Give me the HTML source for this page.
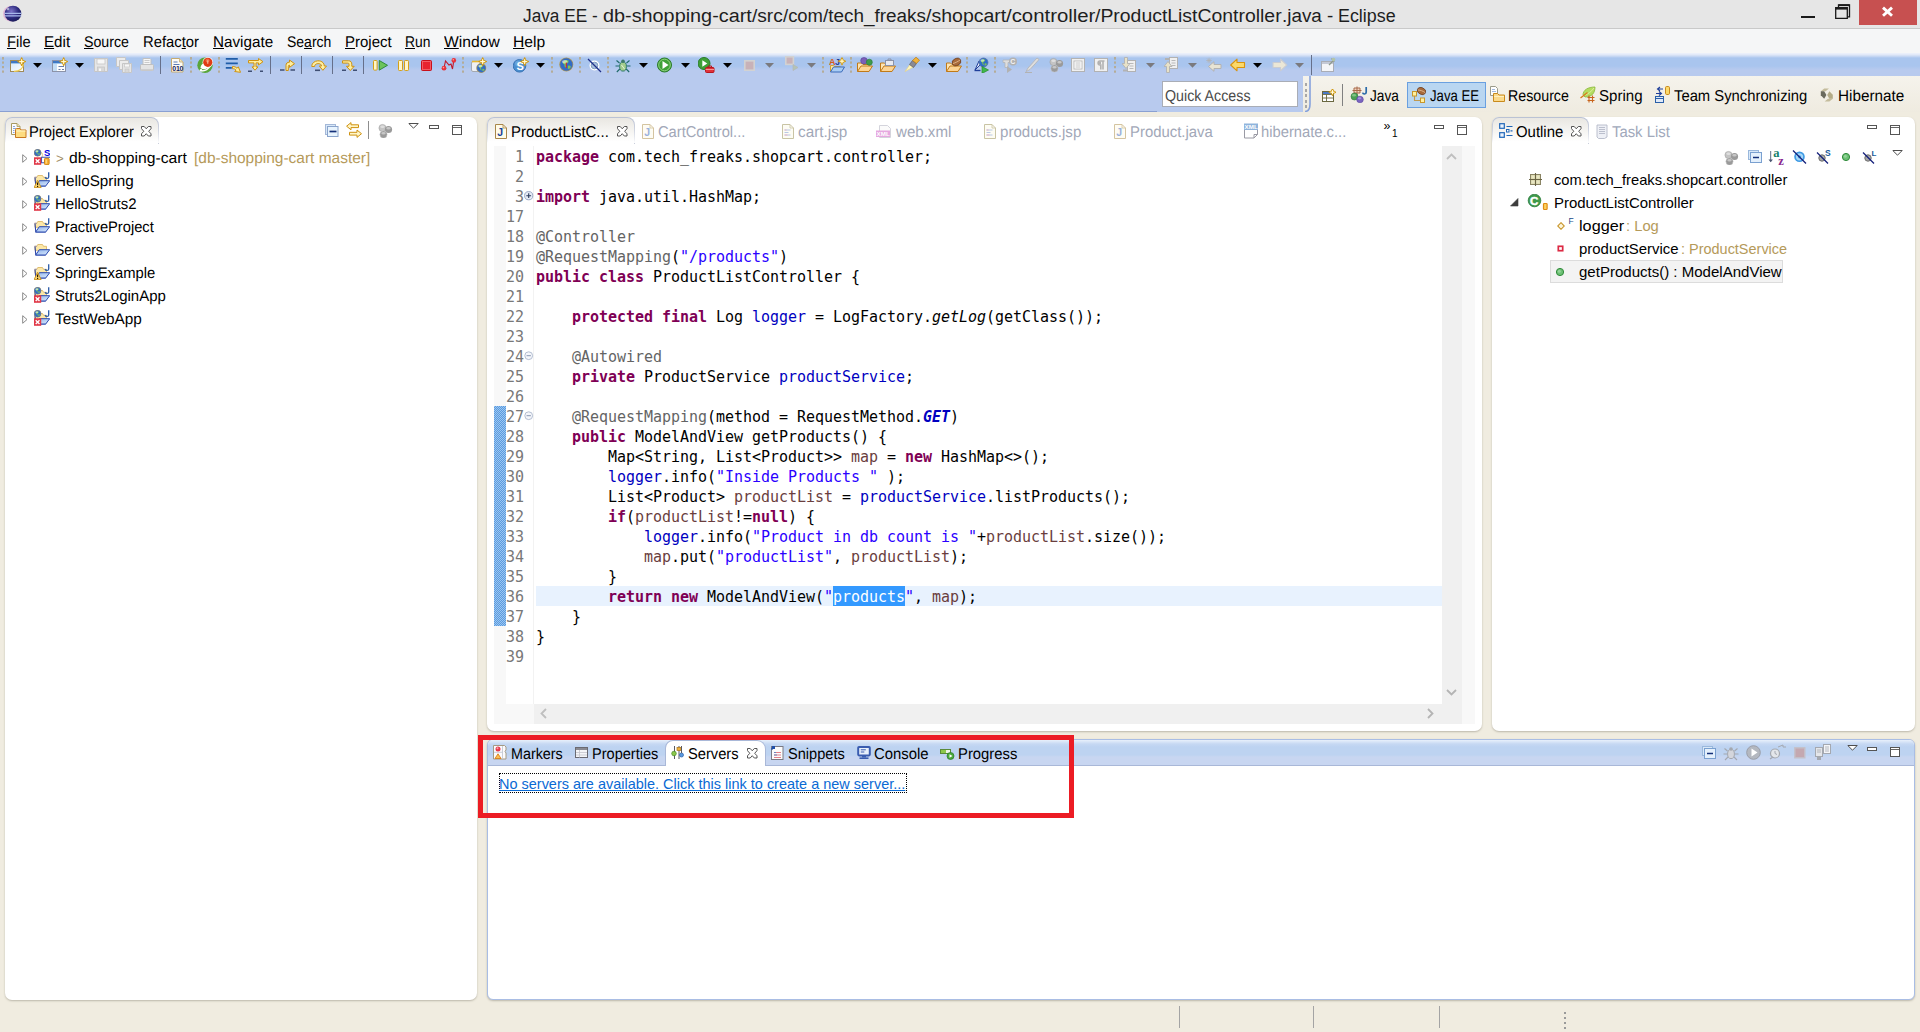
<!DOCTYPE html>
<html lang="en"><head><meta charset="utf-8"><title>Java EE - Eclipse</title>
<style>
html,body{margin:0;padding:0}
body{width:1920px;height:1032px;position:relative;overflow:hidden;background:#f0ece0;font-family:"Liberation Sans",sans-serif}
body>div,body>span,body>svg,body>a{position:absolute;display:block;box-sizing:border-box}
span{white-space:pre}
.s{font-family:"Liberation Sans",sans-serif}
.m{font-family:"DejaVu Sans Mono","Liberation Mono",monospace}
b.k{color:#7f0055;font-weight:bold}
i.f{color:#0000c0;font-style:normal}
i.g{color:#6a3e3e;font-style:normal}
i.a{color:#646464;font-style:normal}
i.q{color:#2a00ff;font-style:normal}
</style></head>
<body>
<svg width="0" height="0" style="left:0;top:0"><defs><linearGradient id="pfg" x1="0" y1="0" x2="1" y2="1"><stop offset="0" stop-color="#8fb4ec"/><stop offset="1" stop-color="#dceafc"/></linearGradient><linearGradient id="gnw" x1="0" y1="0" x2="1" y2="1"><stop offset="0" stop-color="#d4e8fa"/><stop offset="1" stop-color="#fff"/></linearGradient><radialGradient id="ecl" cx="40%" cy="35%" r="70%"><stop offset="0" stop-color="#7d74c8"/><stop offset="0.6" stop-color="#2c2a7e"/><stop offset="1" stop-color="#1b1a55"/></radialGradient></defs></svg>
<div style="left:0px;top:0px;width:1920px;height:29px;background:#e6e6e6;border-bottom:1px solid #c9c9c9"></div>
<span class="s" style="left:523.3px;top:3.56px;font-size:18px;line-height:24px;color:#1e1e1e;transform:scaleX(0.9587);transform-origin:0 50%;">Java EE - </span>
<span class="s" style="left:602.9px;top:3.56px;font-size:18px;line-height:24px;color:#1e1e1e;transform:scaleX(1.1015);transform-origin:0 50%;">db-shopping-cart</span>
<span class="s" style="left:751.7px;top:3.56px;font-size:18px;line-height:24px;color:#1e1e1e;transform:scaleX(1.0621);transform-origin:0 50%;">/src</span>
<span class="s" style="left:782.5px;top:3.56px;font-size:18px;line-height:24px;color:#1e1e1e;transform:scaleX(1.0252);transform-origin:0 50%;">/com</span>
<span class="s" style="left:822.5px;top:3.56px;font-size:18px;line-height:24px;color:#1e1e1e;transform:scaleX(1.0504);transform-origin:0 50%;">/tech_freaks</span>
<span class="s" style="left:925.5px;top:3.56px;font-size:18px;line-height:24px;color:#1e1e1e;transform:scaleX(1.0844);transform-origin:0 50%;">/shopcart</span>
<span class="s" style="left:1005.8px;top:3.56px;font-size:18px;line-height:24px;color:#1e1e1e;transform:scaleX(1.1312);transform-origin:0 50%;">/controller</span>
<span class="s" style="left:1095.2px;top:3.56px;font-size:18px;line-height:24px;color:#1e1e1e;transform:scaleX(1.0781);transform-origin:0 50%;">/ProductListController</span>
<span class="s" style="left:1281.8px;top:3.56px;font-size:18px;line-height:24px;color:#1e1e1e;transform:scaleX(1.0475);transform-origin:0 50%;">.java - </span>
<span class="s" style="left:1338.4px;top:3.56px;font-size:18px;line-height:24px;color:#1e1e1e;transform:scaleX(0.9926);transform-origin:0 50%;">Eclipse</span>
<svg style="left:3px;top:5px;" width="20" height="18" viewBox="0 0 20 18"><ellipse cx="8" cy="8.700" rx="8" ry="7.800" fill="#e0a8d0" opacity=".75"/><ellipse cx="10" cy="8.700" rx="8.300" ry="8" fill="url(#ecl)"/>
<path d="M1.500 8.300h17M1.700 10.800h16.600" stroke="#a8b8ec" stroke-width="1.300"/><circle cx="5" cy="4" r="1.300" fill="#fff" opacity=".5"/></svg>
<div style="left:1801px;top:16px;width:14px;height:2px;background:#1a1a1a"></div>
<svg style="left:1835px;top:4px;" width="16" height="16" viewBox="0 0 16 16"><path d="M3.500 3V0.800h11v12h-2" fill="none" stroke="#1a1a1a" stroke-width="1.300"/><path d="M3.500 1.200h11" stroke="#1a1a1a" stroke-width="1.800"/><path d="M0.700 3.700h11.600v10.600h-11.600z" fill="none" stroke="#1a1a1a" stroke-width="1.300"/><path d="M0.700 4.300h11.600" stroke="#1a1a1a" stroke-width="2.600"/></svg>
<div style="left:1859px;top:0px;width:58px;height:25px;background:#c75050"></div>
<svg style="left:1881px;top:6px;" width="13" height="12" viewBox="0 0 13 12"><path d="M2 1.600l9 8.200M11 1.600l-9 8.200" stroke="#fff" stroke-width="2.900" fill="none"/></svg>
<div style="left:0px;top:29px;width:1920px;height:24px;background:#f5f6f7"></div>
<span class="s" style="left:7.0px;top:33.23px;font-size:15.5px;line-height:20px;color:#000;transform:scaleX(0.9446);transform-origin:0 50%;text-rendering:geometricPrecision;"><u>F</u>ile</span>
<span class="s" style="left:44.3px;top:33.23px;font-size:15.5px;line-height:20px;color:#000;transform:scaleX(0.9768);transform-origin:0 50%;text-rendering:geometricPrecision;"><u>E</u>dit</span>
<span class="s" style="left:84.0px;top:33.23px;font-size:15.5px;line-height:20px;color:#000;transform:scaleX(0.9160);transform-origin:0 50%;text-rendering:geometricPrecision;"><u>S</u>ource</span>
<span class="s" style="left:143.0px;top:33.23px;font-size:15.5px;line-height:20px;color:#000;transform:scaleX(0.9555);transform-origin:0 50%;text-rendering:geometricPrecision;">Refac<u>t</u>or</span>
<span class="s" style="left:213.0px;top:33.23px;font-size:15.5px;line-height:20px;color:#000;transform:scaleX(0.9822);transform-origin:0 50%;text-rendering:geometricPrecision;"><u>N</u>avigate</span>
<span class="s" style="left:286.9px;top:33.23px;font-size:15.5px;line-height:20px;color:#000;transform:scaleX(0.9015);transform-origin:0 50%;text-rendering:geometricPrecision;">Se<u>a</u>rch</span>
<span class="s" style="left:344.9px;top:33.23px;font-size:15.5px;line-height:20px;color:#000;transform:scaleX(0.9658);transform-origin:0 50%;text-rendering:geometricPrecision;"><u>P</u>roject</span>
<span class="s" style="left:405.0px;top:33.23px;font-size:15.5px;line-height:20px;color:#000;transform:scaleX(0.8927);transform-origin:0 50%;text-rendering:geometricPrecision;"><u>R</u>un</span>
<span class="s" style="left:443.7px;top:33.23px;font-size:15.5px;line-height:20px;color:#000;transform:scaleX(1.0101);transform-origin:0 50%;text-rendering:geometricPrecision;"><u>W</u>indow</span>
<span class="s" style="left:512.6999999999999px;top:33.23px;font-size:15.5px;line-height:20px;color:#000;transform:scaleX(1.0097);transform-origin:0 50%;text-rendering:geometricPrecision;"><u>H</u>elp</span>
<div style="left:0px;top:53px;width:1920px;height:59px;background:linear-gradient(#eef2fb 0px,#e2e9f8 1.5px,#cddbf4 3px,#a9c5ee 5px,#a9c5ee 13px,#b8caee 17px,#b8caee 57.5px,#8aa0d2 58.2px,#8aa0d2 59px)"></div>
<svg style="left:2px;top:57px;" width="3" height="17" viewBox="0 0 3 17"><rect x="0" y="0.0" width="2" height="2.6" fill="#b4a88e" opacity=".9"/><rect x="0" y="4.5" width="2" height="2.2" fill="#b4a88e" opacity=".9"/><rect x="0" y="9.0" width="2" height="2.2" fill="#b4a88e" opacity=".9"/><rect x="0" y="13.5" width="2" height="2.2" fill="#b4a88e" opacity=".9"/></svg>
<svg style="left:10px;top:57px;" width="16" height="16" viewBox="0 0 16 16"><rect x="0.500" y="3.500" width="13" height="11" fill="url(#gnw)" stroke="#a08a58"/><rect x="1" y="4" width="12" height="2" fill="#3f78c4"/><rect x="1" y="6" width="12" height="1" fill="#9cc4ec"/><path d="M4 14.300C10 14.300 13.300 11 13.300 7" fill="none" stroke="#f0cc50" stroke-width="1.300"/><path d="M11.7 0.7999999999999998L12.915999999999999 3.3839999999999995 15.5 4.6 12.915999999999999 5.816 11.7 8.399999999999999 10.484 5.816 7.8999999999999995 4.6 10.484 3.3839999999999995Z" fill="#f7d14a" stroke="#d19a16" stroke-width="1.100" stroke-linejoin="round"/><path d="M11.7 2.0999999999999996V7.099999999999999M9.2 4.6H14.2" stroke="#fffbe0" stroke-width="1"/></svg>
<svg style="left:33px;top:63px;" width="9" height="5" viewBox="0 0 9 5"><path d="M0 0H9L4.5 4.8Z" fill="#000"/></svg>
<svg style="left:52px;top:57px;" width="16" height="16" viewBox="0 0 16 16"><rect x="0.500" y="3.500" width="13" height="11" fill="#fdfdfd" stroke="#8c93a8"/><rect x="1" y="4" width="12" height="2" fill="#3f78c4"/><rect x="1" y="6" width="12" height="1" fill="#9cc4ec"/><rect x="1" y="7" width="4" height="7" fill="#c4def6"/><path d="M6.500 9.500h5.500M6.500 12.500h2M10 12.500h2" stroke="#6a7ea8" stroke-width="1.200"/><path d="M11.7 0.7999999999999998L12.915999999999999 3.3839999999999995 15.5 4.6 12.915999999999999 5.816 11.7 8.399999999999999 10.484 5.816 7.8999999999999995 4.6 10.484 3.3839999999999995Z" fill="#f7d14a" stroke="#d19a16" stroke-width="1.100" stroke-linejoin="round"/><path d="M11.7 2.0999999999999996V7.099999999999999M9.2 4.6H14.2" stroke="#fffbe0" stroke-width="1"/></svg>
<svg style="left:75px;top:63px;" width="9" height="5" viewBox="0 0 9 5"><path d="M0 0H9L4.5 4.8Z" fill="#000"/></svg>
<svg style="left:93px;top:57px;" width="16" height="16" viewBox="0 0 16 16"><path d="M1.5 1.5h13v13h-13z" fill="#e6e6e6" stroke="#c6c6c6"/><rect x="4" y="2" width="8" height="5" fill="#f7f7f7" stroke="#c6c6c6" stroke-width=".8"/><rect x="4.5" y="10" width="7" height="4.5" fill="#d8d8d8" stroke="#c6c6c6" stroke-width=".8"/><rect x="6" y="11.500" width="2" height="2.500" fill="#f7f7f7"/></svg>
<svg style="left:116px;top:57px;" width="16" height="16" viewBox="0 0 16 16"><path d="M0.5 0.5h9v9h-9z" fill="#ececec" stroke="#c6c6c6"/><path d="M3.5 3.5h9v9h-9z" fill="#ececec" stroke="#c6c6c6"/><path d="M6.5 6.5h9v9h-9z" fill="#e6e6e6" stroke="#c6c6c6"/><rect x="8.5" y="7" width="5" height="3" fill="#f7f7f7" stroke="#c6c6c6" stroke-width=".7"/><rect x="9" y="12" width="4" height="3.5" fill="#d8d8d8" stroke="#c6c6c6" stroke-width=".7"/></svg>
<svg style="left:139px;top:57px;" width="16" height="16" viewBox="0 0 16 16"><path d="M4 1.5h7l1 1v5h-8z" fill="#f6f6f6" stroke="#c0c0c0"/><path d="M5.500 3.500h5M5.500 5.500h5" stroke="#c0c0c0" stroke-width=".8"/><rect x="1.500" y="7.500" width="13" height="6" rx="1" fill="#e4e4e4" stroke="#c0c0c0"/><rect x="2" y="12" width="12" height="1.600" fill="#cecece"/></svg>
<div style="left:160px;top:56px;width:1px;height:18px;background:#66708a"></div>
<svg style="left:169px;top:57px;" width="16" height="16" viewBox="0 0 16 16"><path d="M2.500 1.500h8l3.500 3.500v10h-11.500z" fill="#fdfcf6" stroke="#c4aa72"/><path d="M10.500 1.500v3.500h3.500" fill="#f0e4c0" stroke="#c4aa72" stroke-width=".8"/><path d="M4.500 5h4M4.500 7.500h6" stroke="#5a7ab8" stroke-width="1.100"/><text x="3.300" y="14.300" font-family="Liberation Sans,sans-serif" font-weight="bold" font-size="7" letter-spacing="-0.300" fill="#14245c">010</text></svg>
<svg style="left:190px;top:57px;" width="3" height="17" viewBox="0 0 3 17"><rect x="0" y="0.0" width="2" height="2.6" fill="#b4a88e" opacity=".9"/><rect x="0" y="4.5" width="2" height="2.2" fill="#b4a88e" opacity=".9"/><rect x="0" y="9.0" width="2" height="2.2" fill="#b4a88e" opacity=".9"/><rect x="0" y="13.5" width="2" height="2.2" fill="#b4a88e" opacity=".9"/></svg>
<svg style="left:197px;top:57px;" width="16" height="16" viewBox="0 0 16 16"><circle cx="8" cy="8.200" r="7.700" fill="#5aa63a"/><path d="M3.500 11c0-3.500 3-5.500 6.500-5l3 3c-3 3-6 4.500-9.500 2z" fill="#fff"/><path d="M4.500 14c3.500 0 7-2 9-5.500" stroke="#fff" stroke-width="1.500" fill="none"/><circle cx="4" cy="13.300" r="1.300" fill="#fff"/><circle cx="10.800" cy="5.300" r="5.300" fill="#fff" opacity=".85"/><circle cx="10.800" cy="5.300" r="4.600" fill="#e03c14"/><circle cx="10.500" cy="3.600" r="2" fill="#f47a50" opacity=".8"/><path d="M10.800 3.300v3.500" stroke="#f8c4a8" stroke-width="1"/></svg>
<svg style="left:218px;top:57px;" width="3" height="17" viewBox="0 0 3 17"><rect x="0" y="0.0" width="2" height="2.6" fill="#b4a88e" opacity=".9"/><rect x="0" y="4.5" width="2" height="2.2" fill="#b4a88e" opacity=".9"/><rect x="0" y="9.0" width="2" height="2.2" fill="#b4a88e" opacity=".9"/><rect x="0" y="13.5" width="2" height="2.2" fill="#b4a88e" opacity=".9"/></svg>
<svg style="left:225px;top:57px;" width="16" height="16" viewBox="0 0 16 16"><path d="M0.800 1.800h12M0.800 6.300h12M0.800 10.800h6" stroke="#1f5ca8" stroke-width="1.700"/><path d="M7.500 9.500c2 0 3.500.5 4.500 1.800l1.300-1.500 2.200 5.500-5.800-.8 1.400-1.500c-1-1-2-1.300-3.600-1.300z" fill="#fdeea0" stroke="#cf9210" stroke-width="1" stroke-linejoin="round"/></svg>
<svg style="left:247px;top:57px;" width="16" height="16" viewBox="0 0 16 16"><path d="M1.500 3.500h10v-2l4.500 3.200-4.500 3.200v-2h-2.500v4h2l-3 3.300-3-3.300h2v-4h-5.500z" fill="#fdeea0" stroke="#cf9210" stroke-width="1" stroke-linejoin="round"/><path d="M1 14.300h4M13 14.300h4" stroke="#3f4f74" stroke-width="1.600"/></svg>
<div style="left:270px;top:56px;width:1px;height:18px;background:#66708a"></div>
<svg style="left:279px;top:57px;" width="16" height="16" viewBox="0 0 16 16"><path d="M7 13.500v-5c0-2.300 1.300-3.300 3.500-3.300v-2.200l5 3.700-5 3.700v-2.200c-.8 0-1.200.3-1.200 1.300v4z" fill="#fdeea0" stroke="#cf9210" stroke-width="1" stroke-linejoin="round"/><path d="M1 13h4.500M11.500 13h4.500" stroke="#3f4f74" stroke-width="1.600"/></svg>
<div style="left:301px;top:56px;width:1px;height:18px;background:#66708a"></div>
<svg style="left:311px;top:57px;" width="16" height="16" viewBox="0 0 16 16"><path d="M0.800 9.500c0-7.500 12.500-7.500 12.500-.5h2.200l-3.600 4.300-3.600-4.300h2.200c0-3.300-6.900-3.300-6.900.5z" fill="#fdeea0" stroke="#cf9210" stroke-width="1" stroke-linejoin="round"/><path d="M4 13.300h5" stroke="#3f4f74" stroke-width="1.600"/></svg>
<div style="left:332px;top:56px;width:1px;height:18px;background:#66708a"></div>
<svg style="left:341px;top:57px;" width="16" height="16" viewBox="0 0 16 16"><path d="M1.500 3.800h6c2.300 0 3.300 1.300 3.300 3.500v2h2.400l-3.900 4.200-3.900-4.200h2.600v-2c0-.8-.3-1.200-1.300-1.200h-5.200z" fill="#fdeea0" stroke="#cf9210" stroke-width="1" stroke-linejoin="round"/><path d="M1 13.300h4M12 13.300h4" stroke="#3f4f74" stroke-width="1.600"/></svg>
<div style="left:363px;top:56px;width:1px;height:18px;background:#66708a"></div>
<svg style="left:372px;top:57px;" width="16" height="16" viewBox="0 0 16 16"><rect x="1.500" y="3.500" width="3.600" height="9.600" rx=".8" fill="#fff6c8" stroke="#d4a017"/><path d="M7.300 3.500l8.200 4.800-8.200 4.800z" fill="#6cc45a" stroke="#2f8a3a" stroke-linejoin="round"/></svg>
<svg style="left:398px;top:57px;" width="16" height="16" viewBox="0 0 16 16"><rect x="0.500" y="3.500" width="4" height="10" rx=".8" fill="#fff6c8" stroke="#d4a017"/><rect x="6.500" y="3.500" width="4" height="10" rx=".8" fill="#fff6c8" stroke="#d4a017"/></svg>
<svg style="left:420px;top:57px;" width="16" height="16" viewBox="0 0 16 16"><rect x="1.500" y="3.500" width="10" height="10" rx="1" fill="#e8242e" stroke="#c8101a"/><rect x="2.500" y="4.500" width="8" height="8" fill="none" stroke="#f46a70" stroke-width=".8"/></svg>
<svg style="left:441px;top:57px;" width="16" height="16" viewBox="0 0 16 16"><path d="M3 11l1.500-7 3.500 4 2-1 1.500 5 1.300-8.500" fill="none" stroke="#c0182a" stroke-width="1.100"/><circle cx="3" cy="11.200" r="2.400" fill="#e8323a"/><circle cx="12.800" cy="3.400" r="2.300" fill="#e8323a"/><circle cx="2.500" cy="10.600" r=".8" fill="#f8a0a0"/><circle cx="12.300" cy="2.800" r=".8" fill="#f8a0a0"/></svg>
<svg style="left:462px;top:57px;" width="3" height="17" viewBox="0 0 3 17"><rect x="0" y="0.0" width="2" height="2.6" fill="#b4a88e" opacity=".9"/><rect x="0" y="4.5" width="2" height="2.2" fill="#b4a88e" opacity=".9"/><rect x="0" y="9.0" width="2" height="2.2" fill="#b4a88e" opacity=".9"/><rect x="0" y="13.5" width="2" height="2.2" fill="#b4a88e" opacity=".9"/></svg>
<svg style="left:471px;top:57px;" width="16" height="16" viewBox="0 0 16 16"><rect x="0.500" y="4.500" width="11" height="10" rx="1.500" fill="#eef0f4" stroke="#a4a8b0"/><path d="M1 4.500h10" stroke="#e8b830" stroke-width="1.600"/><circle cx="10.300" cy="11" r="5" fill="#d4b050"/><circle cx="10.3" cy="11" r="4.3" fill="#2f6cc8" stroke="#5a74a0" stroke-width=".7"/><path d="M7.94 9.06q1.94 -2.15 4.08 -0.64q-0.21 2.15 -1.94 1.94q-0.43 1.94 0.86 3.22q-2.15 -0.43 -1.94 -2.58q-1.50 -0.43 -1.07 -1.94z" fill="#7cc458"/><path d="M11.38 11.86q1.72 -0.43 2.15 0.86q-0.86 1.50 -2.15 1.29z" fill="#7cc458"/><ellipse cx="9.23" cy="9.06" rx="1.94" ry="1.20" fill="#fff" opacity=".55"/><path d="M11.7 0.7999999999999998L12.915999999999999 3.3839999999999995 15.5 4.6 12.915999999999999 5.816 11.7 8.399999999999999 10.484 5.816 7.8999999999999995 4.6 10.484 3.3839999999999995Z" fill="#f7d14a" stroke="#d19a16" stroke-width="1.100" stroke-linejoin="round"/><path d="M11.7 2.0999999999999996V7.099999999999999M9.2 4.6H14.2" stroke="#fffbe0" stroke-width="1"/></svg>
<svg style="left:494px;top:63px;" width="9" height="5" viewBox="0 0 9 5"><path d="M0 0H9L4.5 4.8Z" fill="#000"/></svg>
<svg style="left:513px;top:57px;" width="16" height="16" viewBox="0 0 16 16"><circle cx="6.500" cy="8.800" r="6.300" fill="#4a8ed0" stroke="#3a74b4"/><circle cx="5" cy="6.500" r="3" fill="#7ab0e4" opacity=".6"/><text x="3.600" y="13" font-family="Liberation Sans,sans-serif" font-weight="bold" font-size="11" fill="#fff">S</text><path d="M11.7 0.7999999999999998L12.915999999999999 3.3839999999999995 15.5 4.6 12.915999999999999 5.816 11.7 8.399999999999999 10.484 5.816 7.8999999999999995 4.6 10.484 3.3839999999999995Z" fill="#f7d14a" stroke="#d19a16" stroke-width="1.100" stroke-linejoin="round"/><path d="M11.7 2.0999999999999996V7.099999999999999M9.2 4.6H14.2" stroke="#fffbe0" stroke-width="1"/></svg>
<svg style="left:536px;top:63px;" width="9" height="5" viewBox="0 0 9 5"><path d="M0 0H9L4.5 4.8Z" fill="#000"/></svg>
<svg style="left:551px;top:57px;" width="3" height="17" viewBox="0 0 3 17"><rect x="0" y="0.0" width="2" height="2.6" fill="#b4a88e" opacity=".9"/><rect x="0" y="4.5" width="2" height="2.2" fill="#b4a88e" opacity=".9"/><rect x="0" y="9.0" width="2" height="2.2" fill="#b4a88e" opacity=".9"/><rect x="0" y="13.5" width="2" height="2.2" fill="#b4a88e" opacity=".9"/></svg>
<svg style="left:559px;top:57px;" width="16" height="16" viewBox="0 0 16 16"><circle cx="7.300" cy="7.500" r="7" fill="#c8a850"/><circle cx="7.3" cy="7.5" r="6.2" fill="#2f6cc8" stroke="#5a74a0" stroke-width=".7"/><path d="M3.89 4.71q2.79 -3.10 5.89 -0.93q-0.31 3.10 -2.79 2.79q-0.62 2.79 1.24 4.65q-3.10 -0.62 -2.79 -3.72q-2.17 -0.62 -1.55 -2.79z" fill="#7cc458"/><path d="M8.85 8.74q2.48 -0.62 3.10 1.24q-1.24 2.17 -3.10 1.86z" fill="#7cc458"/><ellipse cx="5.75" cy="4.71" rx="2.79" ry="1.74" fill="#fff" opacity=".55"/><path d="M7.300 5.500v4" stroke="#d8202a" stroke-width="1" fill="none"/><circle cx="7.300" cy="10.300" r=".8" fill="#d8202a"/></svg>
<svg style="left:579px;top:57px;" width="3" height="17" viewBox="0 0 3 17"><rect x="0" y="0.0" width="2" height="2.6" fill="#b4a88e" opacity=".9"/><rect x="0" y="4.5" width="2" height="2.2" fill="#b4a88e" opacity=".9"/><rect x="0" y="9.0" width="2" height="2.2" fill="#b4a88e" opacity=".9"/><rect x="0" y="13.5" width="2" height="2.2" fill="#b4a88e" opacity=".9"/></svg>
<svg style="left:587px;top:57px;" width="16" height="16" viewBox="0 0 16 16"><circle cx="7.500" cy="8.500" r="5" fill="#fff"/><circle cx="7.500" cy="8.500" r="3.300" fill="#a8c0dc" stroke="#7f9cc4" stroke-width="1"/><path d="M1 2l13 13" stroke="#1f2f8a" stroke-width="1.300"/></svg>
<svg style="left:607px;top:57px;" width="3" height="17" viewBox="0 0 3 17"><rect x="0" y="0.0" width="2" height="2.6" fill="#b4a88e" opacity=".9"/><rect x="0" y="4.5" width="2" height="2.2" fill="#b4a88e" opacity=".9"/><rect x="0" y="9.0" width="2" height="2.2" fill="#b4a88e" opacity=".9"/><rect x="0" y="13.5" width="2" height="2.2" fill="#b4a88e" opacity=".9"/></svg>
<svg style="left:615px;top:57px;" width="16" height="16" viewBox="0 0 16 16"><ellipse cx="8" cy="9.500" rx="3.400" ry="4.600" fill="#a4cc8c" stroke="#2f7a6a"/><circle cx="8" cy="4.300" r="1.800" fill="#3f7a6a"/><path d="M4.500 6l-3-2.500M11.500 6l3-2.500M4.300 9h-3.800M11.700 9h3.800M4.800 12l-3 3M11.200 12l3 3" stroke="#1f6a6a" stroke-width="1.100"/><path d="M6.500 8l3 4" stroke="#e4f4d8" stroke-width="1"/></svg>
<svg style="left:639px;top:63px;" width="9" height="5" viewBox="0 0 9 5"><path d="M0 0H9L4.5 4.8Z" fill="#000"/></svg>
<svg style="left:657px;top:57px;" width="16" height="16" viewBox="0 0 16 16"><circle cx="7.500" cy="8" r="7" fill="#3fa037" stroke="#2a7a2a"/><circle cx="7.500" cy="8" r="5.800" fill="none" stroke="#8fd07f" stroke-width="1"/><path d="M5.500 4l6 4-6 4z" fill="#fff"/></svg>
<svg style="left:681px;top:63px;" width="9" height="5" viewBox="0 0 9 5"><path d="M0 0H9L4.5 4.8Z" fill="#000"/></svg>
<svg style="left:698px;top:57px;" width="17" height="16" viewBox="0 0 17 16"><circle cx="6" cy="6.500" r="6" fill="#3fa037" stroke="#2a7a2a"/><path d="M4.300 3.300l5 3.200-5 3.200z" fill="#fff"/><rect x="7.500" y="10.500" width="8.500" height="5" rx="1" fill="#e0323a" stroke="#b8161e"/><path d="M10 10.500v-1.500h3.500v1.500" fill="none" stroke="#b8161e"/><path d="M7.500 12.500h8.500" stroke="#f7b0b0" stroke-width=".8"/></svg>
<svg style="left:723px;top:63px;" width="9" height="5" viewBox="0 0 9 5"><path d="M0 0H9L4.5 4.8Z" fill="#000"/></svg>
<svg style="left:744px;top:60px;" width="11" height="11" viewBox="0 0 11 11"><rect x="0.800" y="0.800" width="9.400" height="9.400" fill="#c8b2b8" stroke="#d2d2d2" stroke-width="1.600"/></svg>
<svg style="left:765px;top:63px;" width="9" height="5" viewBox="0 0 9 5"><path d="M0 0H9L4.5 4.8Z" fill="#7a7a7e"/></svg>
<svg style="left:785px;top:56px;" width="14" height="16" viewBox="0 0 14 16"><rect x="0.800" y="0.800" width="7.600" height="7.600" fill="#c8b2b8" stroke="#d2d2d2" stroke-width="1.600"/><path d="M8 8.500l5 3-5 3z" fill="#b4c4b4" stroke="#b4b8b8" stroke-width=".8"/></svg>
<svg style="left:807px;top:63px;" width="9" height="5" viewBox="0 0 9 5"><path d="M0 0H9L4.5 4.8Z" fill="#7a7a7e"/></svg>
<svg style="left:822px;top:57px;" width="3" height="17" viewBox="0 0 3 17"><rect x="0" y="0.0" width="2" height="2.6" fill="#b4a88e" opacity=".9"/><rect x="0" y="4.5" width="2" height="2.2" fill="#b4a88e" opacity=".9"/><rect x="0" y="9.0" width="2" height="2.2" fill="#b4a88e" opacity=".9"/><rect x="0" y="13.5" width="2" height="2.2" fill="#b4a88e" opacity=".9"/></svg>
<svg style="left:829px;top:57px;" width="17" height="16" viewBox="0 0 17 16"><path d="M1.500 15v-6.500h3l1 1h6" fill="#fce4a0" stroke="#d4a030"/><path d="M1.500 15l3-5h11l-3 5z" fill="#a8ccf4" stroke="#3a6ab8" stroke-linejoin="round"/><text x="0" y="8" font-family="Liberation Sans,sans-serif" font-weight="bold" font-size="9" fill="#d85a18">A</text><text x="6" y="8" font-family="Liberation Sans,sans-serif" font-weight="bold" font-size="9" fill="#1f3f9a">J</text><path d="M13 0.7000000000000002L14.120000000000001 3.08 16.5 4.2 14.120000000000001 5.32 13 7.7 11.879999999999999 5.32 9.5 4.2 11.879999999999999 3.08Z" fill="#f7d14a" stroke="#d19a16" stroke-width="1.100" stroke-linejoin="round"/><path d="M13 2.0V6.4M10.8 4.2H15.2" stroke="#fffbe0" stroke-width="1"/></svg>
<svg style="left:850px;top:57px;" width="3" height="17" viewBox="0 0 3 17"><rect x="0" y="0.0" width="2" height="2.6" fill="#b4a88e" opacity=".9"/><rect x="0" y="4.5" width="2" height="2.2" fill="#b4a88e" opacity=".9"/><rect x="0" y="9.0" width="2" height="2.2" fill="#b4a88e" opacity=".9"/><rect x="0" y="13.5" width="2" height="2.2" fill="#b4a88e" opacity=".9"/></svg>
<svg style="left:857px;top:57px;" width="16" height="16" viewBox="0 0 16 16"><path d="M0.500 14.500v-8.500h4l1.500 1.500h6v2" fill="#fce4b4" stroke="#c07a18"/><path d="M0.500 14.500l3.500-5.500h11.500l-3.500 5.500z" fill="#fcd494" stroke="#c07a18" stroke-linejoin="round"/><circle cx="7" cy="3.800" r="3.300" fill="#7a5fb8" stroke="#5a3f98" stroke-width=".6"/><circle cx="12.300" cy="5.200" r="3" fill="#3f9a4a" stroke="#2a7a3a" stroke-width=".6"/></svg>
<svg style="left:880px;top:57px;" width="16" height="16" viewBox="0 0 16 16"><path d="M0.500 14.500v-8.500h4l1.500 1.500h6v2" fill="#fce4b4" stroke="#c07a18"/><path d="M0.500 14.500l3.500-5.500h11.500l-3.500 5.500z" fill="#fcd494" stroke="#c07a18" stroke-linejoin="round"/><rect x="5.500" y="3.500" width="8" height="5" fill="#e8eaf0" stroke="#8c93a8"/><path d="M8 3.500v-1.500h3v1.500" fill="none" stroke="#8c93a8"/></svg>
<svg style="left:904px;top:57px;" width="16" height="16" viewBox="0 0 16 16"><path d="M1 14.500l5-7 3.500 2.500z" fill="#fff6c0" stroke="#e8d27a" stroke-width=".6"/><path d="M5.500 7.500l3-4 4 3-3 4z" fill="#8a8a92" stroke="#5a5a62" stroke-width=".7"/><path d="M8.500 3.500l3.500-3.300 3.500 3-3 3.300z" fill="#f0b23a" stroke="#b87a14" stroke-width=".7"/></svg>
<svg style="left:928px;top:63px;" width="9" height="5" viewBox="0 0 9 5"><path d="M0 0H9L4.5 4.8Z" fill="#000"/></svg>
<svg style="left:946px;top:57px;" width="16" height="16" viewBox="0 0 16 16"><path d="M0.500 14.500v-8.500h4l1.500 1.500h6v2" fill="#fce4b4" stroke="#c07a18"/><path d="M0.500 14.500l3.500-5.500h11.500l-3.500 5.500z" fill="#fcd494" stroke="#c07a18" stroke-linejoin="round"/><ellipse cx="10.500" cy="5" rx="4.500" ry="3.500" transform="rotate(-25 10.500 5)" fill="#a86a3a" stroke="#6a3a1a" stroke-width=".7"/><path d="M7 6.500c2-.5 5-2 7-3.500" stroke="#e8c49a" stroke-width=".8" fill="none"/></svg>
<svg style="left:966px;top:57px;" width="3" height="17" viewBox="0 0 3 17"><rect x="0" y="0.0" width="2" height="2.6" fill="#b4a88e" opacity=".9"/><rect x="0" y="4.5" width="2" height="2.2" fill="#b4a88e" opacity=".9"/><rect x="0" y="9.0" width="2" height="2.2" fill="#b4a88e" opacity=".9"/><rect x="0" y="13.5" width="2" height="2.2" fill="#b4a88e" opacity=".9"/></svg>
<svg style="left:974px;top:57px;" width="16" height="16" viewBox="0 0 16 16"><path d="M1 13l4-9 2 3z" fill="#e8ecf8" stroke="#1f3f9a" stroke-width="1"/><path d="M0.500 13.500h6" stroke="#1f3f9a" stroke-width="1.400"/><circle cx="9.5" cy="5.5" r="4.5" fill="#2f6cc8" stroke="#5a74a0" stroke-width=".7"/><path d="M7.03 3.48q2.02 -2.25 4.27 -0.67q-0.23 2.25 -2.02 2.02q-0.45 2.02 0.90 3.38q-2.25 -0.45 -2.02 -2.70q-1.57 -0.45 -1.12 -2.02z" fill="#7cc458"/><path d="M10.62 6.40q1.80 -0.45 2.25 0.90q-0.90 1.57 -2.25 1.35z" fill="#7cc458"/><ellipse cx="8.38" cy="3.48" rx="2.02" ry="1.26" fill="#fff" opacity=".55"/><path d="M8 9.500l6.500 3.500-6.500 3.500z" fill="#3fb84a" stroke="#2a8a2a" stroke-width=".7"/></svg>
<svg style="left:994px;top:57px;" width="3" height="17" viewBox="0 0 3 17"><rect x="0" y="0.0" width="2" height="2.6" fill="#b4a88e" opacity=".9"/><rect x="0" y="4.5" width="2" height="2.2" fill="#b4a88e" opacity=".9"/><rect x="0" y="9.0" width="2" height="2.2" fill="#b4a88e" opacity=".9"/><rect x="0" y="13.5" width="2" height="2.2" fill="#b4a88e" opacity=".9"/></svg>
<svg style="left:1002px;top:57px;" width="16" height="16" viewBox="0 0 16 16"><path d="M1 3h7v2.500h-2v5h-3v-5h-2z" fill="#dedede" stroke="#b2b2b2" stroke-width=".7"/><circle cx="11" cy="4.500" r="4" fill="#b2b2b2"/><text x="8.300" y="7" font-family="Liberation Sans,sans-serif" font-weight="bold" font-size="7" fill="#f4f4f8">C</text><path d="M5 9l5 3.500-5 3.500z" fill="#b2b2b2"/></svg>
<svg style="left:1025px;top:57px;" width="16" height="16" viewBox="0 0 16 16"><path d="M1 14.500l4-2 9-10 -2-1.500 -9 10z" fill="#dedede" stroke="#b2b2b2" stroke-width=".8"/><path d="M0 15.500h7" stroke="#b2b2b2" stroke-width="1"/></svg>
<svg style="left:1049px;top:57px;" width="16" height="16" viewBox="0 0 16 16"><circle cx="4.500" cy="5" r="3.600" fill="#c4c4c4" stroke="#9a9a9a" stroke-width=".5"/><ellipse cx="4.5" cy="3.7" rx="2.200" ry="1.300" fill="#fff" opacity=".45"/><circle cx="10.500" cy="6.500" r="3.600" fill="#9a9a9a"/><ellipse cx="10.5" cy="5.2" rx="2.200" ry="1.300" fill="#fff" opacity=".45"/><circle cx="5.500" cy="11.500" r="3.600" fill="#9a9a9a" stroke="#c4c4c4" stroke-width=".5"/><ellipse cx="5.5" cy="10.2" rx="2.200" ry="1.300" fill="#fff" opacity=".45"/></svg>
<svg style="left:1071px;top:57px;" width="16" height="16" viewBox="0 0 16 16"><rect x="0.500" y="1.500" width="13" height="13" fill="#f0f0f0" stroke="#b2b2b2"/><rect x="3" y="4" width="8" height="8" fill="#fff" stroke="#b2b2b2" stroke-width=".8"/><path d="M4.500 6h5M4.500 8h5M4.500 10h5" stroke="#b2b2b2" stroke-width=".8"/></svg>
<svg style="left:1094px;top:57px;" width="16" height="16" viewBox="0 0 16 16"><rect x="0.500" y="1.500" width="13" height="13" fill="#f0f0f0" stroke="#b2b2b2"/><path d="M10.500 4h-4.500c-2.500 0-2.500 4 0 4h.8v4.500M9 4v8.500" stroke="#b2b2b2" stroke-width="1.600" fill="none"/><path d="M6 4.500c-1.500 0-1.500 3 0 3h1v-3z" fill="#b2b2b2"/></svg>
<svg style="left:1114px;top:57px;" width="3" height="17" viewBox="0 0 3 17"><rect x="0" y="0.0" width="2" height="2.6" fill="#b4a88e" opacity=".9"/><rect x="0" y="4.5" width="2" height="2.2" fill="#b4a88e" opacity=".9"/><rect x="0" y="9.0" width="2" height="2.2" fill="#b4a88e" opacity=".9"/><rect x="0" y="13.5" width="2" height="2.2" fill="#b4a88e" opacity=".9"/></svg>
<svg style="left:1122px;top:57px;" width="16" height="16" viewBox="0 0 16 16"><rect x="5.500" y="3.500" width="8" height="11" fill="#f0f0f0" stroke="#b2b2b2"/><path d="M7.500 6.500h4M7.500 9h4M7.500 11.500h4" stroke="#b2b2b2" stroke-width=".9"/><path d="M2.500 0.500h3v6h2.500l-4 5-4-5h2.500z" fill="#e8e2c8" stroke="#b2b2b2" stroke-width=".9"/><rect x="1" y="12.500" width="5" height="2" fill="#b2b2b2"/></svg>
<svg style="left:1146px;top:63px;" width="9" height="5" viewBox="0 0 9 5"><path d="M0 0H9L4.5 4.8Z" fill="#7a7a7e"/></svg>
<svg style="left:1164px;top:57px;" width="16" height="16" viewBox="0 0 16 16"><rect x="5.500" y="0.500" width="8" height="11" fill="#f0f0f0" stroke="#b2b2b2"/><path d="M7.500 3.500h4M7.500 6h4M7.500 8.500h4" stroke="#b2b2b2" stroke-width=".9"/><path d="M2.500 15.500h3v-6h2.500l-4-5-4 5h2.500z" fill="#e8e2c8" stroke="#b2b2b2" stroke-width=".9"/><rect x="1" y="1" width="4" height="2" fill="#b2b2b2"/></svg>
<svg style="left:1188px;top:63px;" width="9" height="5" viewBox="0 0 9 5"><path d="M0 0H9L4.5 4.8Z" fill="#7a7a7e"/></svg>
<svg style="left:1206px;top:57px;" width="16" height="16" viewBox="0 0 16 16"><path d="M2.500 9.500l5.500-4.800v2.800h7v4h-7v2.800z" fill="#e8e4d4" stroke="#b2b2b2" stroke-width="1" stroke-linejoin="round"/><path d="M1 1.500l4 4M5 1.500l-4 4M3 0.800v5.400M0.300 3.500h5.400" stroke="#b2b2b2" stroke-width=".8"/></svg>
<svg style="left:1230px;top:57px;" width="16" height="16" viewBox="0 0 16 16"><path d="M0.700 8l6.300-5.800v3.300h7.500v5h-7.500v3.300z" fill="#fbd96a" stroke="#d9940f" stroke-width="1.100" stroke-linejoin="round"/></svg>
<svg style="left:1253px;top:63px;" width="9" height="5" viewBox="0 0 9 5"><path d="M0 0H9L4.5 4.8Z" fill="#000"/></svg>
<svg style="left:1272px;top:57px;" width="16" height="16" viewBox="0 0 16 16"><path d="M14.800 8l-6.300-5.800v3.300h-7.500v5h7.500v3.300z" fill="#ebe7d6" stroke="#c9ccd3" stroke-width="1.100" stroke-linejoin="round"/></svg>
<svg style="left:1295px;top:63px;" width="9" height="5" viewBox="0 0 9 5"><path d="M0 0H9L4.5 4.8Z" fill="#7a7a7e"/></svg>
<div style="left:1311px;top:55px;width:1px;height:20px;background:#66708a"></div>
<svg style="left:1321px;top:57px;" width="15" height="16" viewBox="0 0 15 16"><rect x="0.500" y="4.500" width="12" height="10" fill="#f4f5f8" stroke="#a9adb6"/><rect x="1" y="5" width="11" height="2" fill="#c4c9d6"/><path d="M8 8l4.500-4.500M10.500 1.500l3 3" stroke="#8e9a8e" stroke-width="1.300"/><circle cx="12.500" cy="2.500" r="1.800" fill="#b4c4a8"/></svg>
<div style="left:1162px;top:81px;width:136px;height:26px;background:#fff;border:1px solid #a9adb6"></div>
<span class="s" style="left:1165.0px;top:86.53px;font-size:15.8px;line-height:20px;color:#4a4a4a;transform:scaleX(0.9018);transform-origin:0 50%;text-rendering:geometricPrecision;">Quick Access</span>
<div style="left:1303px;top:76px;width:617px;height:36px;background:linear-gradient(#f5f3ec,#efebe0)"></div>
<div style="left:1157px;top:111px;width:146px;height:1px;background:#b8caee"></div>
<svg style="left:1303px;top:76px;" width="10" height="36" viewBox="0 0 10 36"><path d="M7 0V28C7 33 5.500 35.500 2 35.500" fill="none" stroke="#86a2dc" stroke-width="1.600"/></svg>
<div style="left:1304.5px;top:83.0px;width:2px;height:3px;background:#a8a8a8"></div>
<div style="left:1304.5px;top:88.6px;width:2px;height:3px;background:#a8a8a8"></div>
<div style="left:1304.5px;top:94.2px;width:2px;height:3px;background:#a8a8a8"></div>
<div style="left:1304.5px;top:99.8px;width:2px;height:3px;background:#a8a8a8"></div>
<div style="left:1304.5px;top:105.4px;width:2px;height:3px;background:#a8a8a8"></div>
<div style="left:1407px;top:82px;width:79px;height:26px;background:#b9d6f1;border:1px solid #6aa0e0"></div>
<svg style="left:1322px;top:89px;" width="14" height="13" viewBox="0 0 14 13"><rect x="0.500" y="2.500" width="11" height="10" fill="#fff" stroke="#6a6840"/><rect x="1" y="3" width="10" height="2" fill="#4a7ac8"/><path d="M0.500 5.500h11M4.500 5.500v7M0.500 9h11" stroke="#6a6840" stroke-width=".9"/><path d="M10.5 -0.19999999999999973L11.588000000000001 2.112 13.9 3.2 11.588000000000001 4.288 10.5 6.6 9.411999999999999 4.288 7.1 3.2 9.411999999999999 2.112Z" fill="#f7d14a" stroke="#d19a16" stroke-width="1.100" stroke-linejoin="round"/><path d="M10.5 1.1000000000000003V5.3M8.4 3.2H12.6" stroke="#fffbe0" stroke-width="1"/></svg>
<svg style="left:1350px;top:86px;" width="18" height="17" viewBox="0 0 18 17"><path d="M4 2h6v5h-6zM7 0.500v8M2.500 4.500h9" fill="#f0d4c0" stroke="#a86a4a" stroke-width="1"/><circle cx="4.500" cy="10.500" r="3.500" fill="#4aa054" stroke="#2a7a3a" stroke-width=".6"/><ellipse cx="4" cy="9.300" rx="2" ry="1.200" fill="#a4dca8" opacity=".6"/><circle cx="10" cy="13.500" r="3.300" fill="#7a64c0" stroke="#5a44a0" stroke-width=".6"/><ellipse cx="9.500" cy="12.300" rx="1.800" ry="1.100" fill="#c4b8ec" opacity=".6"/><path d="M16.200 1v5.300c0 2.200-3.200 2.200-3.500 .4" fill="none" stroke="#2a6aa8" stroke-width="1.700"/></svg>
<svg style="left:1412px;top:87px;" width="15" height="16" viewBox="0 0 15 16"><path d="M2.500 9v4.500h6" fill="none" stroke="#c09a50" stroke-width="1.100"/><rect x="0.500" y="4.500" width="4" height="4.500" fill="#fff0a0" stroke="#c8962c"/><rect x="8.500" y="11" width="4" height="4.500" fill="#fff0a0" stroke="#c8962c"/><ellipse cx="9.500" cy="4" rx="4.300" ry="3.300" transform="rotate(25 9.500 4)" fill="#a86a3a" stroke="#6a3a1a" stroke-width=".7"/><path d="M6 3c2 0 5 1 7 2.500" stroke="#e8c49a" stroke-width=".8" fill="none"/></svg>
<svg style="left:1490px;top:86px;" width="16" height="17" viewBox="0 0 16 17"><path d="M0.500 0.500h5l2 2v7h-7z" fill="#fff" stroke="#9a9a8a"/><path d="M2 3.500h3M2 5.500h4" stroke="#8aa8d8" stroke-width=".8"/><path d="M3.500 15.500v-8h4l1.500 1.500h5.500v6.500z" fill="#fbd98a" stroke="#c98a1c"/><path d="M4 10.500h10" stroke="#fdf0c0" stroke-width="1"/></svg>
<svg style="left:1580px;top:86px;" width="17" height="17" viewBox="0 0 17 17"><path d="M3 9c0-5 5-8 12-8 0 6-3 10-10 10z" fill="#b4dc60" stroke="#88b838" stroke-width=".8"/><path d="M5 9c3-1 6-3 9-7" stroke="#e0f0a0" stroke-width="1" fill="none"/><path d="M0.500 12l7-5.500" stroke="#d87a1c" stroke-width="1.300"/><path d="M9 9.500v7M12.500 9.500v7M7.500 11.500h7M7.500 14.500h7" stroke="#c8641c" stroke-width="1.100"/></svg>
<svg style="left:1655px;top:86px;" width="16" height="17" viewBox="0 0 16 17"><rect x="10.500" y="0.500" width="4" height="8" rx="1.200" fill="#fbd96a" stroke="#c98a1c"/><rect x="0.500" y="10.500" width="8" height="6" fill="#dfe9f8" stroke="#2a5fa8"/><path d="M0.500 12.500h8" stroke="#2a5fa8"/><path d="M8 3h-5M5 1l-2.500 2 2.500 2M1 7.500h5M4 5.500l2.500 2-2.500 2" fill="none" stroke="#1f3f9a" stroke-width="1.100"/></svg>
<svg style="left:1820px;top:88px;" width="14" height="14" viewBox="0 0 14 14"><path d="M0.800 3.300l3.400-2.800h4.800l-3.400 2.800z" fill="#c4bc9c"/><path d="M0.800 3.300h3.400l2.200 3.700-2.200 3.700-3.400-3.500z" fill="#6a6a5e"/><path d="M12.800 10.700l-3.400 2.800h-4.800l3.400-2.800z" fill="#c4bc9c"/><path d="M12.800 10.700h-3.400l-2.200-3.700 2.200-3.700 3.400 3.500z" fill="#b4ac88"/></svg>
<div style="left:1342px;top:84px;width:1px;height:22px;background:#808080"></div>
<span class="s" style="left:1370.4px;top:86.56px;font-size:15.7px;line-height:20px;color:#000;transform:scaleX(0.8720);transform-origin:0 50%;text-rendering:geometricPrecision;">Java</span>
<span class="s" style="left:1430.4px;top:86.56px;font-size:15.7px;line-height:20px;color:#000;transform:scaleX(0.8402);transform-origin:0 50%;text-rendering:geometricPrecision;">Java EE</span>
<span class="s" style="left:1508.4px;top:86.56px;font-size:15.7px;line-height:20px;color:#000;transform:scaleX(0.9071);transform-origin:0 50%;text-rendering:geometricPrecision;">Resource</span>
<span class="s" style="left:1599.4px;top:86.56px;font-size:15.7px;line-height:20px;color:#000;transform:scaleX(0.9612);transform-origin:0 50%;text-rendering:geometricPrecision;">Spring</span>
<span class="s" style="left:1673.6000000000001px;top:86.56px;font-size:15.7px;line-height:20px;color:#000;transform:scaleX(0.9436);transform-origin:0 50%;text-rendering:geometricPrecision;">Team Synchronizing</span>
<span class="s" style="left:1838.2px;top:86.56px;font-size:15.7px;line-height:20px;color:#000;transform:scaleX(0.9746);transform-origin:0 50%;text-rendering:geometricPrecision;">Hibernate</span>
<div style="left:5px;top:117px;width:472px;height:883px;background:#fff;border-radius:7px;box-shadow:0 1px 2px rgba(110,105,90,.4);"></div>
<div style="left:5px;top:117px;width:154px;height:26px;background:linear-gradient(#b9c1d4,#cfd4e0 50%,#eceef3 85%,#fff);border-radius:7px 8px 0 0"></div>
<div style="left:6px;top:118px;width:152px;height:25px;background:linear-gradient(#e9e7e2,#f5f4f1 50%,#fff 95%);border-radius:6px 7px 0 0"></div>
<div style="left:158px;top:143px;width:1px;height:1px;background:#c9cedb"></div>
<svg style="left:10px;top:123px;" width="17" height="16" viewBox="0 0 17 16"><path d="M1.500 0.500h5.500l3 3v8h-8.500z" fill="#fbfcff" stroke="#a89a60"/><path d="M7 0.500v3h3" fill="#e8dcb0" stroke="#a89a60" stroke-width=".8"/><path d="M3 3.500h2M3 5.500h3M3 7.500h1.500M3 9.500h1.500" stroke="#7a9ad8" stroke-width=".9"/><path d="M5.500 14.500v-8l1-1h3.500l1 1.500h5v7.500z" fill="#fddc80" stroke="#c87820" stroke-linejoin="round"/><path d="M6.500 8h9" stroke="#fff4c0" stroke-width="1.200"/></svg>
<span class="s" style="left:29.0px;top:122.09px;font-size:15.6px;line-height:20px;color:#000;transform:scaleX(0.9447);transform-origin:0 50%;text-rendering:geometricPrecision;margin-top:1px;">Project Explorer</span>
<svg style="left:140.5px;top:126px;" width="11" height="11" viewBox="0 0 11 11"><path d="M0.500 0.500H3.200L5.250 2.800 7.300 0.500H10V2.700L7.700 5.250 10 7.800V10H7.300L5.250 7.700 3.200 10H0.500V7.800L2.800 5.250 0.500 2.700Z" fill="#fff" stroke="#555" stroke-width="1" stroke-linejoin="miter"/></svg>
<svg style="left:325px;top:124px;" width="14" height="13" viewBox="0 0 14 13"><rect x="0.500" y="0.500" width="10" height="10" fill="#d8e8f8" stroke="#a4b8d8"/><rect x="2.500" y="2.500" width="10.500" height="10" fill="#e8f4fe" stroke="#8aa4cc"/><path d="M4.500 7.500h7" stroke="#14307a" stroke-width="1.700"/></svg>
<svg style="left:346px;top:122px;" width="16" height="16" viewBox="0 0 16 16"><path d="M0.600 4.200L5 0.600V2.800H12.500V5.600H5V7.800Z" fill="#fff6c8" stroke="#cf9210" stroke-width="1" stroke-linejoin="round"/><path d="M15.500 11.700L11 8V10.300H3.500V13.100H11V15.400Z" fill="#fff6c8" stroke="#cf9210" stroke-width="1" stroke-linejoin="round"/></svg>
<div style="left:368px;top:121px;width:1px;height:18px;background:#8e8e8e"></div>
<svg style="left:378px;top:123px;" width="15" height="15" viewBox="0 0 15 15"><circle cx="4.500" cy="5" r="3.600" fill="#c4c4c4" stroke="#9a9a9a" stroke-width=".5"/><ellipse cx="4.5" cy="3.7" rx="2.200" ry="1.300" fill="#fff" opacity=".45"/><circle cx="10.500" cy="6.500" r="3.600" fill="#9a9a9a"/><ellipse cx="10.5" cy="5.2" rx="2.200" ry="1.300" fill="#fff" opacity=".45"/><circle cx="5.500" cy="11.500" r="3.600" fill="#9a9a9a" stroke="#c4c4c4" stroke-width=".5"/><ellipse cx="5.5" cy="10.2" rx="2.200" ry="1.300" fill="#fff" opacity=".45"/></svg>
<svg style="left:408px;top:123px;" width="11" height="6" viewBox="0 0 11 6"><path d="M0.800 0.500h9.400l-4.700 4.700z" fill="#fff" stroke="#4d4d4d" stroke-width="1"/></svg>
<div style="left:429px;top:125px;width:10px;height:4px;border:1px solid #555;background:#fff"></div>
<div style="left:452px;top:125px;width:10px;height:10px;border:1px solid #555;background:#fff"></div>
<div style="left:453px;top:127px;width:8px;height:1px;background:#666"></div>
<svg style="left:22px;top:154.0px;" width="6" height="9" viewBox="0 0 6 9"><path d="M0.7 0.7L5 4.5 0.7 8.3Z" fill="#fff" stroke="#8a8a8a" stroke-width="1"/></svg>
<svg style="left:34px;top:149px;" width="16" height="16" viewBox="0 0 16 16"><path d="M7 3.500l1.500 1.500v3.500" fill="none" stroke="#e8d8a0" stroke-width="1.200"/><path d="M7 8.300h9M7.500 8.300v5.500h3" fill="none" stroke="#3a5ab8" stroke-width="1.100"/><circle cx="3.600" cy="3.700" r="3.700" fill="#c8b070"/><circle cx="3.6" cy="3.7" r="3.2" fill="#2f6cc8" stroke="#5a74a0" stroke-width=".7"/><path d="M1.84 2.26q1.44 -1.60 3.04 -0.48q-0.16 1.60 -1.44 1.44q-0.32 1.44 0.64 2.40q-1.60 -0.32 -1.44 -1.92q-1.12 -0.32 -0.80 -1.44z" fill="#7cc458"/><path d="M4.40 4.34q1.28 -0.32 1.60 0.64q-0.64 1.12 -1.60 0.96z" fill="#7cc458"/><ellipse cx="2.80" cy="2.26" rx="1.44" ry="0.90" fill="#fff" opacity=".55"/><rect x="0" y="8.300" width="7.200" height="7.500" fill="#e03848"/><path d="M1.700 10.200l3.800 3.800M5.500 10.200l-3.800 3.800" stroke="#fff" stroke-width="1.400"/><rect x="10.500" y="9.300" width="4.600" height="6.400" rx="1" fill="#f8b030" stroke="#d08010"/><path d="M12.200 10.500v4" stroke="#fde4a0" stroke-width="1"/><text x="10" y="7" font-family="Liberation Sans,sans-serif" font-weight="bold" font-size="9.500" fill="#0000e0">S</text></svg>
<span class="s" style="left:56.1px;top:148.82px;font-size:13.5px;line-height:20px;color:#a08c64;transform:scaleX(0.9885);transform-origin:0 50%;text-rendering:geometricPrecision;">&gt;</span>
<span class="s" style="left:69.0px;top:148.70px;font-size:15.3px;line-height:20px;color:#000;transform:scaleX(1.0262);transform-origin:0 50%;text-rendering:geometricPrecision;">db-shopping-cart</span>
<span class="s" style="left:194.0px;top:148.70px;font-size:15.3px;line-height:20px;color:#b59a5a;transform:scaleX(1.0115);transform-origin:0 50%;text-rendering:geometricPrecision;">[db-shopping-cart master]</span>
<svg style="left:22px;top:177.0px;" width="6" height="9" viewBox="0 0 6 9"><path d="M0.7 0.7L5 4.5 0.7 8.3Z" fill="#fff" stroke="#8a8a8a" stroke-width="1"/></svg>
<svg style="left:34px;top:172px;" width="16" height="16" viewBox="0 0 16 16"><path d="M1 5.300h1.800l1-1.800h4.700l1 1.800h3v4h-11.500z" fill="#fce8a8" stroke="#dcb868" stroke-width=".9" stroke-linejoin="round"/><path d="M0.300 5.300h2.500" stroke="#9a90a8" stroke-width="1"/><path d="M1 5.800l.8 8.200h10" fill="none" stroke="#3048a8" stroke-width="1.100"/><path d="M5.300 8.700h10.400l-4 5.300h-10z" fill="url(#pfg)" stroke="#2a4ab0" stroke-width="1" stroke-linejoin="round"/><path d="M14.700 0.300v4.600c0 2-3.300 2-3.500 .2" fill="none" stroke="#2a5aa8" stroke-width="1.300"/><path d="M3.600 8.300l3.500 7.300h-7z" fill="#fcd870" stroke="#c89018" stroke-width=".9" stroke-linejoin="round"/><path d="M3.600 10.600v2.600M3.600 14v.9" stroke="#2a1a00" stroke-width="1.200"/></svg>
<span class="s" style="left:55.199999999999996px;top:171.70px;font-size:15.3px;line-height:20px;color:#000;transform:scaleX(0.9952);transform-origin:0 50%;text-rendering:geometricPrecision;">HelloSpring</span>
<svg style="left:22px;top:200.0px;" width="6" height="9" viewBox="0 0 6 9"><path d="M0.7 0.7L5 4.5 0.7 8.3Z" fill="#fff" stroke="#8a8a8a" stroke-width="1"/></svg>
<svg style="left:34px;top:195px;" width="16" height="16" viewBox="0 0 16 16"><path d="M1 5.300h1.800l1-1.800h4.700l1 1.800h3v4h-11.500z" fill="#fce8a8" stroke="#dcb868" stroke-width=".9" stroke-linejoin="round"/><path d="M0.300 5.300h2.500" stroke="#9a90a8" stroke-width="1"/><path d="M1 5.800l.8 8.200h10" fill="none" stroke="#3048a8" stroke-width="1.100"/><path d="M5.300 8.700h10.400l-4 5.300h-10z" fill="url(#pfg)" stroke="#2a4ab0" stroke-width="1" stroke-linejoin="round"/><path d="M14.700 0.300v4.600c0 2-3.300 2-3.500 .2" fill="none" stroke="#2a5aa8" stroke-width="1.300"/><circle cx="3.600" cy="3.700" r="3.700" fill="#c8b070"/><circle cx="3.6" cy="3.7" r="3.2" fill="#2f6cc8" stroke="#5a74a0" stroke-width=".7"/><path d="M1.84 2.26q1.44 -1.60 3.04 -0.48q-0.16 1.60 -1.44 1.44q-0.32 1.44 0.64 2.40q-1.60 -0.32 -1.44 -1.92q-1.12 -0.32 -0.80 -1.44z" fill="#7cc458"/><path d="M4.40 4.34q1.28 -0.32 1.60 0.64q-0.64 1.12 -1.60 0.96z" fill="#7cc458"/><ellipse cx="2.80" cy="2.26" rx="1.44" ry="0.90" fill="#fff" opacity=".55"/><rect x="0" y="8.300" width="7.200" height="7.500" fill="#e03848"/><path d="M1.700 10.200l3.800 3.800M5.500 10.200l-3.800 3.800" stroke="#fff" stroke-width="1.400"/></svg>
<span class="s" style="left:55.199999999999996px;top:194.70px;font-size:15.3px;line-height:20px;color:#000;transform:scaleX(0.9781);transform-origin:0 50%;text-rendering:geometricPrecision;">HelloStruts2</span>
<svg style="left:22px;top:223.0px;" width="6" height="9" viewBox="0 0 6 9"><path d="M0.7 0.7L5 4.5 0.7 8.3Z" fill="#fff" stroke="#8a8a8a" stroke-width="1"/></svg>
<svg style="left:34px;top:218px;" width="16" height="16" viewBox="0 0 16 16"><path d="M1 5.300h1.800l1-1.800h4.700l1 1.800h3v4h-11.500z" fill="#fce8a8" stroke="#dcb868" stroke-width=".9" stroke-linejoin="round"/><path d="M0.300 5.300h2.500" stroke="#9a90a8" stroke-width="1"/><path d="M1 5.800l.8 8.200h10" fill="none" stroke="#3048a8" stroke-width="1.100"/><path d="M5.300 8.700h10.400l-4 5.300h-10z" fill="url(#pfg)" stroke="#2a4ab0" stroke-width="1" stroke-linejoin="round"/><path d="M14.700 0.300v4.600c0 2-3.300 2-3.500 .2" fill="none" stroke="#2a5aa8" stroke-width="1.300"/></svg>
<span class="s" style="left:55.199999999999996px;top:217.70px;font-size:15.3px;line-height:20px;color:#000;transform:scaleX(0.9604);transform-origin:0 50%;text-rendering:geometricPrecision;">PractiveProject</span>
<svg style="left:22px;top:246.0px;" width="6" height="9" viewBox="0 0 6 9"><path d="M0.7 0.7L5 4.5 0.7 8.3Z" fill="#fff" stroke="#8a8a8a" stroke-width="1"/></svg>
<svg style="left:34px;top:241px;" width="16" height="16" viewBox="0 0 16 16"><path d="M1 5.300h1.800l1-1.800h4.700l1 1.800h3v4h-11.500z" fill="#fce8a8" stroke="#dcb868" stroke-width=".9" stroke-linejoin="round"/><path d="M0.300 5.300h2.500" stroke="#9a90a8" stroke-width="1"/><path d="M1 5.800l.8 8.200h10" fill="none" stroke="#3048a8" stroke-width="1.100"/><path d="M5.300 8.700h10.400l-4 5.300h-10z" fill="url(#pfg)" stroke="#2a4ab0" stroke-width="1" stroke-linejoin="round"/></svg>
<span class="s" style="left:55.199999999999996px;top:240.70px;font-size:15.3px;line-height:20px;color:#000;transform:scaleX(0.9070);transform-origin:0 50%;text-rendering:geometricPrecision;">Servers</span>
<svg style="left:22px;top:269.0px;" width="6" height="9" viewBox="0 0 6 9"><path d="M0.7 0.7L5 4.5 0.7 8.3Z" fill="#fff" stroke="#8a8a8a" stroke-width="1"/></svg>
<svg style="left:34px;top:264px;" width="16" height="16" viewBox="0 0 16 16"><path d="M1 5.300h1.800l1-1.800h4.700l1 1.800h3v4h-11.500z" fill="#fce8a8" stroke="#dcb868" stroke-width=".9" stroke-linejoin="round"/><path d="M0.300 5.300h2.500" stroke="#9a90a8" stroke-width="1"/><path d="M1 5.800l.8 8.200h10" fill="none" stroke="#3048a8" stroke-width="1.100"/><path d="M5.300 8.700h10.400l-4 5.300h-10z" fill="url(#pfg)" stroke="#2a4ab0" stroke-width="1" stroke-linejoin="round"/><path d="M14.700 0.300v4.600c0 2-3.300 2-3.500 .2" fill="none" stroke="#2a5aa8" stroke-width="1.300"/><path d="M3.600 8.300l3.500 7.300h-7z" fill="#fcd870" stroke="#c89018" stroke-width=".9" stroke-linejoin="round"/><path d="M3.600 10.600v2.600M3.600 14v.9" stroke="#2a1a00" stroke-width="1.200"/></svg>
<span class="s" style="left:55.199999999999996px;top:263.70px;font-size:15.3px;line-height:20px;color:#000;transform:scaleX(0.9669);transform-origin:0 50%;text-rendering:geometricPrecision;">SpringExample</span>
<svg style="left:22px;top:292.0px;" width="6" height="9" viewBox="0 0 6 9"><path d="M0.7 0.7L5 4.5 0.7 8.3Z" fill="#fff" stroke="#8a8a8a" stroke-width="1"/></svg>
<svg style="left:34px;top:287px;" width="16" height="16" viewBox="0 0 16 16"><path d="M1 5.300h1.800l1-1.800h4.700l1 1.800h3v4h-11.500z" fill="#fce8a8" stroke="#dcb868" stroke-width=".9" stroke-linejoin="round"/><path d="M0.300 5.300h2.500" stroke="#9a90a8" stroke-width="1"/><path d="M1 5.800l.8 8.200h10" fill="none" stroke="#3048a8" stroke-width="1.100"/><path d="M5.300 8.700h10.400l-4 5.300h-10z" fill="url(#pfg)" stroke="#2a4ab0" stroke-width="1" stroke-linejoin="round"/><path d="M14.700 0.300v4.600c0 2-3.300 2-3.500 .2" fill="none" stroke="#2a5aa8" stroke-width="1.300"/><circle cx="3.600" cy="3.700" r="3.700" fill="#c8b070"/><circle cx="3.6" cy="3.7" r="3.2" fill="#2f6cc8" stroke="#5a74a0" stroke-width=".7"/><path d="M1.84 2.26q1.44 -1.60 3.04 -0.48q-0.16 1.60 -1.44 1.44q-0.32 1.44 0.64 2.40q-1.60 -0.32 -1.44 -1.92q-1.12 -0.32 -0.80 -1.44z" fill="#7cc458"/><path d="M4.40 4.34q1.28 -0.32 1.60 0.64q-0.64 1.12 -1.60 0.96z" fill="#7cc458"/><ellipse cx="2.80" cy="2.26" rx="1.44" ry="0.90" fill="#fff" opacity=".55"/><rect x="0" y="8.300" width="7.200" height="7.500" fill="#e03848"/><path d="M1.700 10.200l3.800 3.800M5.500 10.200l-3.800 3.800" stroke="#fff" stroke-width="1.400"/></svg>
<span class="s" style="left:55.199999999999996px;top:286.70px;font-size:15.3px;line-height:20px;color:#000;transform:scaleX(0.9796);transform-origin:0 50%;text-rendering:geometricPrecision;">Struts2LoginApp</span>
<svg style="left:22px;top:315.0px;" width="6" height="9" viewBox="0 0 6 9"><path d="M0.7 0.7L5 4.5 0.7 8.3Z" fill="#fff" stroke="#8a8a8a" stroke-width="1"/></svg>
<svg style="left:34px;top:310px;" width="16" height="16" viewBox="0 0 16 16"><path d="M1 5.300h1.800l1-1.800h4.700l1 1.800h3v4h-11.500z" fill="#fce8a8" stroke="#dcb868" stroke-width=".9" stroke-linejoin="round"/><path d="M0.300 5.300h2.500" stroke="#9a90a8" stroke-width="1"/><path d="M1 5.800l.8 8.200h10" fill="none" stroke="#3048a8" stroke-width="1.100"/><path d="M5.300 8.700h10.400l-4 5.300h-10z" fill="url(#pfg)" stroke="#2a4ab0" stroke-width="1" stroke-linejoin="round"/><path d="M14.700 0.300v4.600c0 2-3.300 2-3.500 .2" fill="none" stroke="#2a5aa8" stroke-width="1.300"/><circle cx="3.600" cy="3.700" r="3.700" fill="#c8b070"/><circle cx="3.6" cy="3.7" r="3.2" fill="#2f6cc8" stroke="#5a74a0" stroke-width=".7"/><path d="M1.84 2.26q1.44 -1.60 3.04 -0.48q-0.16 1.60 -1.44 1.44q-0.32 1.44 0.64 2.40q-1.60 -0.32 -1.44 -1.92q-1.12 -0.32 -0.80 -1.44z" fill="#7cc458"/><path d="M4.40 4.34q1.28 -0.32 1.60 0.64q-0.64 1.12 -1.60 0.96z" fill="#7cc458"/><ellipse cx="2.80" cy="2.26" rx="1.44" ry="0.90" fill="#fff" opacity=".55"/><rect x="0" y="8.300" width="7.200" height="7.500" fill="#e03848"/><path d="M1.700 10.200l3.800 3.800M5.500 10.200l-3.800 3.800" stroke="#fff" stroke-width="1.400"/></svg>
<span class="s" style="left:55.199999999999996px;top:309.70px;font-size:15.3px;line-height:20px;color:#000;transform:scaleX(1.0040);transform-origin:0 50%;text-rendering:geometricPrecision;">TestWebApp</span>
<div style="left:487px;top:117px;width:995px;height:614px;background:#fff;border-radius:7px;box-shadow:0 1px 2px rgba(110,105,90,.4);"></div>
<div style="left:487px;top:117px;width:148px;height:26px;background:linear-gradient(#b9c1d4,#cfd4e0 50%,#eceef3 85%,#fff);border-radius:7px 8px 0 0"></div>
<div style="left:488px;top:118px;width:146px;height:25px;background:linear-gradient(#e9e7e2,#f5f4f1 50%,#fff 95%);border-radius:6px 7px 0 0"></div>
<div style="left:634px;top:143px;width:1px;height:1px;background:#c9cedb"></div>
<svg style="left:495px;top:124px;" width="12" height="15" viewBox="0 0 12 15"><path d="M0.500 0.500h7.500l3.500 3.500v10.500h-11z" fill="#fffbe8" stroke="#a8864a"/><path d="M8 0.500v3.500h3.500" fill="none" stroke="#a8864a" stroke-width=".8"/><text x="2.300" y="11.600" font-family="Liberation Sans,sans-serif" font-weight="bold" font-size="10.500" fill="#1a3f98">J</text></svg>
<span class="s" style="left:511.09999999999997px;top:122.09px;font-size:15.6px;line-height:20px;color:#000;transform:scaleX(0.9563);transform-origin:0 50%;text-rendering:geometricPrecision;margin-top:1px;">ProductListC...</span>
<svg style="left:616.5px;top:126px;" width="11" height="11" viewBox="0 0 11 11"><path d="M0.500 0.500H3.200L5.250 2.800 7.300 0.500H10V2.700L7.700 5.250 10 7.800V10H7.300L5.250 7.700 3.200 10H0.500V7.800L2.800 5.250 0.500 2.700Z" fill="#fff" stroke="#555" stroke-width="1" stroke-linejoin="miter"/></svg>
<svg style="left:641.7px;top:124px;" width="12" height="15" viewBox="0 0 12 15"><path d="M0.500 0.500h7.500l3.500 3.500v10.500h-11z" fill="#fefcf4" stroke="#d4c4a0"/><path d="M8 0.500v3.500h3.500" fill="none" stroke="#d4c4a0" stroke-width=".8"/><text x="2.300" y="11.600" font-family="Liberation Sans,sans-serif" font-weight="bold" font-size="10.500" fill="#9ab0dc">J</text></svg>
<span class="s" style="left:658.3px;top:122.09px;font-size:15.6px;line-height:20px;color:#a2a8b8;transform:scaleX(0.9414);transform-origin:0 50%;text-rendering:geometricPrecision;margin-top:1px;">CartControl...</span>
<svg style="left:782px;top:124px;" width="12" height="15" viewBox="0 0 12 15"><path d="M0.500 0.500h7.500l3.500 3.500v10.500h-11z" fill="#fdfcf4" stroke="#c9c4a4"/><path d="M8 0.500v3.500h3.500" fill="none" stroke="#c9c4a4" stroke-width=".8"/><path d="M2.500 6h6M2.500 8.500h4M2.500 11h6" stroke="#b8c8e4" stroke-width="1"/><path d="M2.500 6h2M2.500 11h3" stroke="#e8b4c8" stroke-width="1"/></svg>
<span class="s" style="left:797.9px;top:122.09px;font-size:15.6px;line-height:20px;color:#a2a8b8;transform:scaleX(0.9808);transform-origin:0 50%;text-rendering:geometricPrecision;margin-top:1px;">cart.jsp</span>
<svg style="left:876px;top:125px;" width="16" height="13" viewBox="0 0 16 13"><path d="M3.500 0.500h8l3 3v9h-11z" fill="#fbfbfb" stroke="#d4d4dc"/><rect x="0" y="5.500" width="14" height="6.500" fill="#e6a8e0"/><text x="0.600" y="11.300" font-family="Liberation Sans,sans-serif" font-weight="bold" font-size="6.200" fill="#fff">XML</text></svg>
<span class="s" style="left:895.9px;top:122.09px;font-size:15.6px;line-height:20px;color:#a2a8b8;transform:scaleX(0.9667);transform-origin:0 50%;text-rendering:geometricPrecision;margin-top:1px;">web.xml</span>
<svg style="left:984px;top:124px;" width="12" height="15" viewBox="0 0 12 15"><path d="M0.500 0.500h7.500l3.500 3.500v10.500h-11z" fill="#fdfcf4" stroke="#c9c4a4"/><path d="M8 0.500v3.500h3.500" fill="none" stroke="#c9c4a4" stroke-width=".8"/><path d="M2.500 6h6M2.500 8.500h4M2.500 11h6" stroke="#b8c8e4" stroke-width="1"/><path d="M2.500 6h2M2.500 11h3" stroke="#e8b4c8" stroke-width="1"/></svg>
<span class="s" style="left:999.9px;top:122.09px;font-size:15.6px;line-height:20px;color:#a2a8b8;transform:scaleX(0.9670);transform-origin:0 50%;text-rendering:geometricPrecision;margin-top:1px;">products.jsp</span>
<svg style="left:1114px;top:124px;" width="12" height="15" viewBox="0 0 12 15"><path d="M0.500 0.500h7.500l3.500 3.500v10.500h-11z" fill="#fefcf4" stroke="#d4c4a0"/><path d="M8 0.500v3.500h3.500" fill="none" stroke="#d4c4a0" stroke-width=".8"/><text x="2.300" y="11.600" font-family="Liberation Sans,sans-serif" font-weight="bold" font-size="10.500" fill="#9ab0dc">J</text></svg>
<span class="s" style="left:1129.9px;top:122.09px;font-size:15.6px;line-height:20px;color:#a2a8b8;transform:scaleX(0.9552);transform-origin:0 50%;text-rendering:geometricPrecision;margin-top:1px;">Product.java</span>
<svg style="left:1243px;top:123px;" width="16" height="16" viewBox="0 0 16 16"><path d="M1.500 5.500h13v6l-3.500 3.500h-9.500z" fill="#fff" stroke="#9a9aa4"/><path d="M11 15v-3.500h3.500" fill="none" stroke="#9a9aa4"/><rect x="1" y="0.500" width="14" height="6.500" fill="#8fb4dc"/><text x="1.600" y="6" font-family="Liberation Sans,sans-serif" font-weight="bold" font-size="6.200" fill="#fff">XML</text></svg>
<span class="s" style="left:1260.9px;top:122.09px;font-size:15.6px;line-height:20px;color:#a2a8b8;transform:scaleX(0.9461);transform-origin:0 50%;text-rendering:geometricPrecision;margin-top:1px;">hibernate.c...</span>
<span class="s" style="left:1383.5px;top:116.17px;font-size:12.5px;line-height:20px;color:#000;">»</span>
<span class="s" style="left:1392px;top:124.03px;font-size:10px;line-height:20px;color:#000;">1</span>
<div style="left:1434px;top:125px;width:10px;height:4px;border:1px solid #555;background:#fff"></div>
<div style="left:1457px;top:125px;width:10px;height:10px;border:1px solid #555;background:#fff"></div>
<div style="left:1458px;top:127px;width:8px;height:1px;background:#666"></div>
<div style="left:494px;top:146px;width:12px;height:578px;background:#f8f8f8"></div>
<div style="left:506px;top:704px;width:28px;height:20px;background:#f8f8f8"></div>
<div style="left:533px;top:146px;width:1px;height:558px;background:#f2f2f2"></div>
<div style="left:494px;top:406px;width:12px;height:220px;background:#6fa9e4;background-image:repeating-conic-gradient(#5a9be0 0 25%,#9cc6f0 0 50%);background-size:2px 2px"></div>
<div style="left:536px;top:586px;width:906px;height:20px;background:#e8f2fe"></div>
<div style="left:833px;top:586px;width:72px;height:20px;background:#3399ff"></div>
<div style="left:1442px;top:146px;width:20px;height:578px;background:#f0f0f0"></div>
<div style="left:1462px;top:146px;width:13px;height:578px;background:#f8f8f8"></div>
<div style="left:534px;top:704px;width:908px;height:20px;background:#f0f0f0"></div>
<svg style="left:1446px;top:153px;" width="11" height="7" viewBox="0 0 11 7"><path d="M1 6L5.5 1.5 10 6" fill="none" stroke="#bfbfbf" stroke-width="1.8"/></svg>
<svg style="left:1446px;top:689px;" width="11" height="7" viewBox="0 0 11 7"><path d="M1 1L5.5 5.5 10 1" fill="none" stroke="#b4b4b4" stroke-width="1.8"/></svg>
<svg style="left:540px;top:708px;" width="7" height="11" viewBox="0 0 7 11"><path d="M6 1L1.500 5.500 6 10" fill="none" stroke="#bfbfbf" stroke-width="1.8"/></svg>
<svg style="left:1427px;top:708px;" width="7" height="11" viewBox="0 0 7 11"><path d="M1 1L5.500 5.500 1 10" fill="none" stroke="#b4b4b4" stroke-width="1.8"/></svg>
<span class="m" style="left:515px;top:146.80px;font-size:15px;line-height:20px;color:#787878;letter-spacing:-0.031px;">1</span>
<span class="m" style="left:536px;top:146.80px;font-size:15px;line-height:20px;color:#000;letter-spacing:-0.031px;"><b class="k">package</b> com.tech_freaks.shopcart.controller;</span>
<span class="m" style="left:515px;top:166.80px;font-size:15px;line-height:20px;color:#787878;letter-spacing:-0.031px;">2</span>
<span class="m" style="left:515px;top:186.80px;font-size:15px;line-height:20px;color:#787878;letter-spacing:-0.031px;">3</span>
<span class="m" style="left:536px;top:186.80px;font-size:15px;line-height:20px;color:#000;letter-spacing:-0.031px;"><b class="k">import</b> java.util.HashMap;</span>
<span class="m" style="left:506px;top:206.80px;font-size:15px;line-height:20px;color:#787878;letter-spacing:-0.031px;">17</span>
<span class="m" style="left:506px;top:226.80px;font-size:15px;line-height:20px;color:#787878;letter-spacing:-0.031px;">18</span>
<span class="m" style="left:536px;top:226.80px;font-size:15px;line-height:20px;color:#000;letter-spacing:-0.031px;"><i class="a">@Controller</i></span>
<span class="m" style="left:506px;top:246.80px;font-size:15px;line-height:20px;color:#787878;letter-spacing:-0.031px;">19</span>
<span class="m" style="left:536px;top:246.80px;font-size:15px;line-height:20px;color:#000;letter-spacing:-0.031px;"><i class="a">@RequestMapping</i>(<i class="q">"/products"</i>)</span>
<span class="m" style="left:506px;top:266.80px;font-size:15px;line-height:20px;color:#787878;letter-spacing:-0.031px;">20</span>
<span class="m" style="left:536px;top:266.80px;font-size:15px;line-height:20px;color:#000;letter-spacing:-0.031px;"><b class="k">public</b> <b class="k">class</b> ProductListController {</span>
<span class="m" style="left:506px;top:286.80px;font-size:15px;line-height:20px;color:#787878;letter-spacing:-0.031px;">21</span>
<span class="m" style="left:506px;top:306.80px;font-size:15px;line-height:20px;color:#787878;letter-spacing:-0.031px;">22</span>
<span class="m" style="left:536px;top:306.80px;font-size:15px;line-height:20px;color:#000;letter-spacing:-0.031px;">    <b class="k">protected</b> <b class="k">final</b> Log <i class="f">logger</i> = LogFactory.<em>getLog</em>(getClass());</span>
<span class="m" style="left:506px;top:326.80px;font-size:15px;line-height:20px;color:#787878;letter-spacing:-0.031px;">23</span>
<span class="m" style="left:506px;top:346.80px;font-size:15px;line-height:20px;color:#787878;letter-spacing:-0.031px;">24</span>
<span class="m" style="left:536px;top:346.80px;font-size:15px;line-height:20px;color:#000;letter-spacing:-0.031px;">    <i class="a">@Autowired</i></span>
<span class="m" style="left:506px;top:366.80px;font-size:15px;line-height:20px;color:#787878;letter-spacing:-0.031px;">25</span>
<span class="m" style="left:536px;top:366.80px;font-size:15px;line-height:20px;color:#000;letter-spacing:-0.031px;">    <b class="k">private</b> ProductService <i class="f">productService</i>;</span>
<span class="m" style="left:506px;top:386.80px;font-size:15px;line-height:20px;color:#787878;letter-spacing:-0.031px;">26</span>
<span class="m" style="left:506px;top:406.80px;font-size:15px;line-height:20px;color:#787878;letter-spacing:-0.031px;">27</span>
<span class="m" style="left:536px;top:406.80px;font-size:15px;line-height:20px;color:#000;letter-spacing:-0.031px;">    <i class="a">@RequestMapping</i>(method = RequestMethod.<b style="color:#0000c0;font-style:italic">GET</b>)</span>
<span class="m" style="left:506px;top:426.80px;font-size:15px;line-height:20px;color:#787878;letter-spacing:-0.031px;">28</span>
<span class="m" style="left:536px;top:426.80px;font-size:15px;line-height:20px;color:#000;letter-spacing:-0.031px;">    <b class="k">public</b> ModelAndView getProducts() {</span>
<span class="m" style="left:506px;top:446.80px;font-size:15px;line-height:20px;color:#787878;letter-spacing:-0.031px;">29</span>
<span class="m" style="left:536px;top:446.80px;font-size:15px;line-height:20px;color:#000;letter-spacing:-0.031px;">        Map&lt;String, List&lt;Product&gt;&gt; <i class="g">map</i> = <b class="k">new</b> HashMap&lt;&gt;();</span>
<span class="m" style="left:506px;top:466.80px;font-size:15px;line-height:20px;color:#787878;letter-spacing:-0.031px;">30</span>
<span class="m" style="left:536px;top:466.80px;font-size:15px;line-height:20px;color:#000;letter-spacing:-0.031px;">        <i class="f">logger</i>.info(<i class="q">"Inside Products "</i> );</span>
<span class="m" style="left:506px;top:486.80px;font-size:15px;line-height:20px;color:#787878;letter-spacing:-0.031px;">31</span>
<span class="m" style="left:536px;top:486.80px;font-size:15px;line-height:20px;color:#000;letter-spacing:-0.031px;">        List&lt;Product&gt; <i class="g">productList</i> = <i class="f">productService</i>.listProducts();</span>
<span class="m" style="left:506px;top:506.80px;font-size:15px;line-height:20px;color:#787878;letter-spacing:-0.031px;">32</span>
<span class="m" style="left:536px;top:506.80px;font-size:15px;line-height:20px;color:#000;letter-spacing:-0.031px;">        <b class="k">if</b>(<i class="g">productList</i>!=<b class="k">null</b>) {</span>
<span class="m" style="left:506px;top:526.80px;font-size:15px;line-height:20px;color:#787878;letter-spacing:-0.031px;">33</span>
<span class="m" style="left:536px;top:526.80px;font-size:15px;line-height:20px;color:#000;letter-spacing:-0.031px;">            <i class="f">logger</i>.info(<i class="q">"Product in db count is "</i>+<i class="g">productList</i>.size());</span>
<span class="m" style="left:506px;top:546.80px;font-size:15px;line-height:20px;color:#787878;letter-spacing:-0.031px;">34</span>
<span class="m" style="left:536px;top:546.80px;font-size:15px;line-height:20px;color:#000;letter-spacing:-0.031px;">            <i class="g">map</i>.put(<i class="q">"productList"</i>, <i class="g">productList</i>);</span>
<span class="m" style="left:506px;top:566.80px;font-size:15px;line-height:20px;color:#787878;letter-spacing:-0.031px;">35</span>
<span class="m" style="left:536px;top:566.80px;font-size:15px;line-height:20px;color:#000;letter-spacing:-0.031px;">        }</span>
<span class="m" style="left:506px;top:586.80px;font-size:15px;line-height:20px;color:#787878;letter-spacing:-0.031px;">36</span>
<span class="m" style="left:536px;top:586.80px;font-size:15px;line-height:20px;color:#000;letter-spacing:-0.031px;">        <b class="k">return</b> <b class="k">new</b> ModelAndView(<i class="q">"</i><span style="color:#fff">products</span><i class="q">"</i>, <i class="g">map</i>);</span>
<span class="m" style="left:506px;top:606.80px;font-size:15px;line-height:20px;color:#787878;letter-spacing:-0.031px;">37</span>
<span class="m" style="left:536px;top:606.80px;font-size:15px;line-height:20px;color:#000;letter-spacing:-0.031px;">    }</span>
<span class="m" style="left:506px;top:626.80px;font-size:15px;line-height:20px;color:#787878;letter-spacing:-0.031px;">38</span>
<span class="m" style="left:536px;top:626.80px;font-size:15px;line-height:20px;color:#000;letter-spacing:-0.031px;">}</span>
<span class="m" style="left:506px;top:646.80px;font-size:15px;line-height:20px;color:#787878;letter-spacing:-0.031px;">39</span>
<svg style="left:524px;top:191px;" width="10" height="10" viewBox="0 0 10 10"><circle cx="4.700" cy="4.700" r="4.100" fill="#e6ecf6" stroke="#9aa8c4" stroke-width="1"/><path d="M2.300 4.700h4.800M4.700 2.300v4.800" stroke="#2a3a5c" stroke-width="1.100"/></svg>
<svg style="left:524px;top:351px;" width="10" height="10" viewBox="0 0 10 10"><circle cx="4.700" cy="4.700" r="3.900" fill="#f4f6fa" stroke="#b4bed2" stroke-width="1"/><path d="M2.500 4.700h4.400" stroke="#8a98b4" stroke-width="1"/></svg>
<svg style="left:524px;top:411px;" width="10" height="10" viewBox="0 0 10 10"><circle cx="4.700" cy="4.700" r="3.900" fill="#f4f6fa" stroke="#b4bed2" stroke-width="1"/><path d="M2.500 4.700h4.400" stroke="#8a98b4" stroke-width="1"/></svg>
<div style="left:1492px;top:117px;width:423px;height:614px;background:#fff;border-radius:7px;box-shadow:0 1px 2px rgba(110,105,90,.4);"></div>
<div style="left:1492px;top:117px;width:97px;height:26px;background:linear-gradient(#b9c1d4,#cfd4e0 50%,#eceef3 85%,#fff);border-radius:7px 8px 0 0"></div>
<div style="left:1493px;top:118px;width:95px;height:25px;background:linear-gradient(#e9e7e2,#f5f4f1 50%,#fff 95%);border-radius:6px 7px 0 0"></div>
<div style="left:1588px;top:143px;width:1px;height:1px;background:#c9cedb"></div>
<svg style="left:1499px;top:123px;" width="14" height="15" viewBox="0 0 14 15"><rect x="0.700" y="0.700" width="4.600" height="4.600" fill="#eaf2fc" stroke="#1f66b8" stroke-width="1.200"/><rect x="0.700" y="9.700" width="4.600" height="4.600" fill="#eaf2fc" stroke="#1f66b8" stroke-width="1.200"/><path d="M7.500 3.500h6M7.500 12.500h6M11.500 7.800h2" stroke="#1f66b8" stroke-width="1.200"/><rect x="7.500" y="6.500" width="2.500" height="2.500" fill="#fff" stroke="#1f66b8" stroke-width="1"/></svg>
<span class="s" style="left:1516.1000000000001px;top:122.09px;font-size:15.6px;line-height:20px;color:#000;transform:scaleX(0.9571);transform-origin:0 50%;text-rendering:geometricPrecision;margin-top:1px;">Outline</span>
<svg style="left:1570.5px;top:126px;" width="11" height="11" viewBox="0 0 11 11"><path d="M0.500 0.500H3.200L5.250 2.800 7.300 0.500H10V2.700L7.700 5.250 10 7.800V10H7.300L5.250 7.700 3.200 10H0.500V7.800L2.800 5.250 0.500 2.700Z" fill="#fff" stroke="#555" stroke-width="1" stroke-linejoin="miter"/></svg>
<svg style="left:1596px;top:124px;" width="12" height="15" viewBox="0 0 12 15"><path d="M1 1h10v12l-2.500 1.500h-6l-1.500-1.500z" fill="#eef0f6" stroke="#b4b9c8" stroke-width=".9"/><path d="M3 3.500h6M3 5.500h6M3 7.500h6M3 9.500h6" stroke="#b4b9c8" stroke-width=".9"/></svg>
<span class="s" style="left:1612.4px;top:122.09px;font-size:15.6px;line-height:20px;color:#a1a9bb;transform:scaleX(0.9527);transform-origin:0 50%;text-rendering:geometricPrecision;margin-top:1px;">Task List</span>
<div style="left:1867px;top:125px;width:10px;height:4px;border:1px solid #555;background:#fff"></div>
<div style="left:1890px;top:125px;width:10px;height:10px;border:1px solid #555;background:#fff"></div>
<div style="left:1891px;top:127px;width:8px;height:1px;background:#666"></div>
<svg style="left:1724px;top:150px;" width="15" height="15" viewBox="0 0 15 15"><circle cx="4.500" cy="5" r="3.600" fill="#c4c4c4" stroke="#9a9a9a" stroke-width=".5"/><ellipse cx="4.5" cy="3.7" rx="2.200" ry="1.300" fill="#fff" opacity=".45"/><circle cx="10.500" cy="6.500" r="3.600" fill="#9a9a9a"/><ellipse cx="10.5" cy="5.2" rx="2.200" ry="1.300" fill="#fff" opacity=".45"/><circle cx="5.500" cy="11.500" r="3.600" fill="#9a9a9a" stroke="#c4c4c4" stroke-width=".5"/><ellipse cx="5.5" cy="10.2" rx="2.200" ry="1.300" fill="#fff" opacity=".45"/></svg>
<svg style="left:1748px;top:150px;" width="15" height="14" viewBox="0 0 15 14"><rect x="0.500" y="0.500" width="10" height="9" fill="#d8e8f8" stroke="#9ab8dc"/><rect x="2.500" y="2.500" width="11" height="10" fill="#e4f0fc" stroke="#7aa0d0"/><path d="M5 7.500h6" stroke="#14307a" stroke-width="1.500"/></svg>
<svg style="left:1768px;top:148px;" width="18" height="18" viewBox="0 0 18 18"><path d="M2.700 3v10.500" fill="none" stroke="#5a6a84" stroke-width="1"/><path d="M0.500 11.500h4.400l-2.200 2.800z" fill="#4a5670"/><text x="5.300" y="9" font-family="Liberation Serif,serif" font-weight="bold" font-size="12.500" fill="#16806a">a</text><text x="10.300" y="17.300" font-family="Liberation Serif,serif" font-weight="bold" font-size="12.500" fill="#8a2a90">z</text></svg>
<svg style="left:1792px;top:149px;" width="16" height="16" viewBox="0 0 16 16"><circle cx="7.500" cy="7.800" r="5.300" fill="#3f9ae4"/><circle cx="7.500" cy="7.800" r="3.600" fill="#a8d8f8"/><circle cx="7.500" cy="7.800" r="1.600" fill="#3f9ae4"/><path d="M1 1.500l13 13" stroke="#141f7a" stroke-width="1.300"/></svg>
<svg style="left:1816px;top:148px;" width="16" height="17" viewBox="0 0 16 17"><circle cx="6" cy="10" r="3.200" fill="#a8a8a8" stroke="#6e6e6e" stroke-width="1"/><path d="M1 4.500l11 11" stroke="#141f7a" stroke-width="1.300"/><text x="9" y="7.500" font-family="Liberation Sans,sans-serif" font-weight="bold" font-size="8.500" fill="#1a5a9a">S</text></svg>
<svg style="left:1841px;top:152px;" width="10" height="10" viewBox="0 0 10 10"><circle cx="5" cy="5" r="3.600" fill="#6cc074" stroke="#2f8a3a" stroke-width="1"/><circle cx="4.300" cy="4.200" r="1.500" fill="#a4dca8" opacity=".7"/></svg>
<svg style="left:1862px;top:148px;" width="16" height="17" viewBox="0 0 16 17"><circle cx="6" cy="10" r="3.200" fill="#a8a8a8" stroke="#6e6e6e" stroke-width="1"/><path d="M1 4.500l11 11" stroke="#141f7a" stroke-width="1.300"/><text x="9.500" y="8" font-family="Liberation Sans,sans-serif" font-weight="bold" font-size="8" fill="#1a5a9a">L</text></svg>
<svg style="left:1892px;top:150px;" width="11" height="6" viewBox="0 0 11 6"><path d="M0.800 0.500h9.400l-4.700 4.700z" fill="#fff" stroke="#4d4d4d" stroke-width="1"/></svg>
<div style="left:1550px;top:260px;width:233px;height:23px;background:#f3f3f3;border:1px solid #dcdcdc"></div>
<svg style="left:1529px;top:173px;" width="14" height="14" viewBox="0 0 14 14"><rect x="1.500" y="1.500" width="10" height="10" fill="#d8d4a8" stroke="#8a8464"/><path d="M6.500 0v13M0 6.500h13" stroke="#6a6444" stroke-width="1.100"/><path d="M2.500 2.500h3v3h-3zM7.500 2.500h3v3h-3zM2.500 7.500h3v3h-3zM7.500 7.500h3v3h-3z" fill="#e8e6c4"/></svg>
<svg style="left:1510px;top:198px;" width="9" height="9" viewBox="0 0 9 9"><path d="M8 0.500v7.500h-7.500z" fill="#3c3c3c" stroke="#3c3c3c" stroke-width=".6"/></svg>
<svg style="left:1527px;top:194px;" width="22" height="17" viewBox="0 0 22 17"><circle cx="7.500" cy="6.500" r="6.300" fill="#3f9a4a" stroke="#2a7a3a" stroke-width=".8"/><text x="3" y="10.700" font-family="Liberation Sans,sans-serif" font-weight="bold" font-size="11.500" fill="#fff" stroke="#fff" stroke-width=".5">C</text><rect x="16.500" y="9.500" width="3.600" height="6" rx=".8" fill="#fbd060" stroke="#e08a10" stroke-width="1.200"/></svg>
<svg style="left:1557px;top:222px;" width="8" height="8" viewBox="0 0 8 8"><path d="M4 0.700l3.300 3.300-3.300 3.300-3.300-3.300z" fill="#fdf6dc" stroke="#c9962c" stroke-width="1.100"/></svg>
<span class="s" style="left:1568.5px;top:215.55px;font-size:8.5px;line-height:10px;color:#1a4a8a;">F</span>
<svg style="left:1557px;top:245px;" width="8" height="8" viewBox="0 0 8 8"><rect x="1.300" y="1.300" width="4.400" height="4.400" fill="#fff" stroke="#dc2a44" stroke-width="1.700"/></svg>
<svg style="left:1555px;top:267px;" width="10" height="10" viewBox="0 0 10 10"><circle cx="5" cy="5" r="3.600" fill="#6cc074" stroke="#2f8a3a" stroke-width="1"/><circle cx="4.300" cy="4.200" r="1.500" fill="#a4dca8" opacity=".7"/></svg>
<span class="s" style="left:1553.7px;top:170.10px;font-size:15px;line-height:20px;color:#000;transform:scaleX(0.9819);transform-origin:0 50%;">com.tech_freaks.shopcart.controller</span>
<span class="s" style="left:1553.9px;top:193.10px;font-size:15px;line-height:20px;color:#000;transform:scaleX(0.9981);transform-origin:0 50%;">ProductListController</span>
<span class="s" style="left:1578.6000000000001px;top:216.10px;font-size:15px;line-height:20px;color:#000;transform:scaleX(1.0815);transform-origin:0 50%;">logger</span>
<span class="s" style="left:1626.1000000000001px;top:216.10px;font-size:15px;line-height:20px;color:#b59a5a;transform:scaleX(0.9828);transform-origin:0 50%;">: Log</span>
<span class="s" style="left:1578.6000000000001px;top:239.10px;font-size:15px;line-height:20px;color:#000;transform:scaleX(0.9954);transform-origin:0 50%;">productService</span>
<span class="s" style="left:1681.0px;top:239.10px;font-size:15px;line-height:20px;color:#b59a5a;transform:scaleX(0.9641);transform-origin:0 50%;">: ProductService</span>
<span class="s" style="left:1578.6000000000001px;top:262.10px;font-size:15px;line-height:20px;color:#000;transform:scaleX(1.0018);transform-origin:0 50%;">getProducts() : ModelAndView</span>
<div style="left:487px;top:739px;width:1428px;height:261px;background:#fff;border-radius:7px;box-shadow:0 1px 2px rgba(110,105,90,.4);border:1px solid #a9bde4;border-radius:6px;overflow:hidden"></div>
<div style="left:488px;top:740px;width:1426px;height:26px;background:linear-gradient(#e8f0fb 0,#c6d8f3 4px,#bdd3f1 7px,#bdd3f1 15px,#c8d6f1 17px,#c8d6f1 25px);border-bottom:1px solid #a9b8d8;border-radius:5px 5px 0 0"></div>
<div style="left:665px;top:740px;width:101px;height:26px;background:#fff;border:1px solid #a9b8d8;border-bottom:none;border-radius:8px 9px 0 0"></div>
<svg style="left:493px;top:745px;" width="14" height="15" viewBox="0 0 14 15"><path d="M0.500 0.500h11l1.500 1.500v3l-1 1.500 1 1.500v6h-12.500z" fill="#fbfbfd" stroke="#a49a84"/><path d="M9.500 1v13M1 7.300h8.500" stroke="#c4c8d4" stroke-width=".9"/><circle cx="5" cy="3.900" r="2.500" fill="#e8384a"/><circle cx="4.500" cy="3.300" r="1" fill="#f8a0a8"/><path d="M5 8.800l3 4.700h-6z" fill="#fcc050" stroke="#d8801c" stroke-width=".9" stroke-linejoin="round"/></svg>
<svg style="left:575px;top:747px;" width="13" height="11" viewBox="0 0 13 11"><rect x="0.500" y="0.500" width="12" height="10" fill="#f4f5f8" stroke="#6a6a72"/><rect x="1" y="1" width="11" height="2" fill="#8a8a92"/><path d="M1 5.500h11M1 8h11M4.500 3v7.500" stroke="#c4c4cc" stroke-width=".8"/></svg>
<svg style="left:671px;top:745px;" width="13" height="15" viewBox="0 0 13 15"><path d="M3.500 1v13M8 1v13" stroke="#5a5a62" stroke-width="1"/><rect x="6" y="2.500" width="4" height="3" fill="#f0b23a" stroke="#a8741c" stroke-width=".7"/><circle cx="3" cy="8.500" r="2.300" fill="#8cc84a" stroke="#4a8a2a" stroke-width=".7"/><circle cx="10.500" cy="10" r="2" fill="#5a9ae0" stroke="#2a5fa8" stroke-width=".7"/><path d="M10.500 1v7" stroke="#5a5a62"/></svg>
<svg style="left:771px;top:745px;" width="13" height="15" viewBox="0 0 13 15"><rect x="0.500" y="1.500" width="11.500" height="13" fill="#fbfbfb" stroke="#7a7a84"/><path d="M0.500 4.500l3-3" stroke="#1f4fa8" stroke-width="1.600"/><rect x="1" y="1" width="3" height="3" fill="#1f4fa8"/><path d="M3 7.500h7M3 10h7M3 12.500h7" stroke="#e0707a" stroke-width=".9"/><path d="M3 7.500h2M3 10h3" stroke="#5a84c0" stroke-width=".9"/></svg>
<svg style="left:857px;top:746px;" width="14" height="13" viewBox="0 0 14 13"><rect x="1.200" y="1" width="11.600" height="8.400" rx=".8" fill="#e8f0fc" stroke="#3a5cb0" stroke-width="2"/><path d="M3.800 3.800h5M3.800 6h3.500" stroke="#3a5cb0" stroke-width="1"/><path d="M5 9.500h4v2h-4z" fill="#3a5cb0"/><path d="M2.500 12.200h9" stroke="#3a5cb0" stroke-width="1.600"/></svg>
<svg style="left:940px;top:748px;" width="15" height="12" viewBox="0 0 15 12"><rect x="0.500" y="1.500" width="10" height="4" fill="#8cc84a" stroke="#5a8a3a"/><rect x="6" y="2" width="4" height="3" fill="#eef4e4"/><circle cx="10.500" cy="8" r="3.500" fill="#4aaa3a" stroke="#2a7a2a" stroke-width=".7"/><path d="M9.500 6.200l3 1.800-3 1.800z" fill="#fff"/></svg>
<span class="s" style="left:511.09999999999997px;top:743.89px;font-size:15.6px;line-height:20px;color:#000;transform:scaleX(0.9196);transform-origin:0 50%;text-rendering:geometricPrecision;margin-top:1px;">Markers</span>
<span class="s" style="left:592.4px;top:743.89px;font-size:15.6px;line-height:20px;color:#000;transform:scaleX(0.9328);transform-origin:0 50%;text-rendering:geometricPrecision;margin-top:1px;">Properties</span>
<span class="s" style="left:688.4px;top:743.89px;font-size:15.6px;line-height:20px;color:#000;transform:scaleX(0.9417);transform-origin:0 50%;text-rendering:geometricPrecision;margin-top:1px;">Servers</span>
<svg style="left:747px;top:748px;" width="11" height="11" viewBox="0 0 11 11"><path d="M0.500 0.500H3.200L5.250 2.800 7.300 0.500H10V2.700L7.700 5.250 10 7.800V10H7.300L5.250 7.700 3.200 10H0.500V7.800L2.800 5.250 0.500 2.700Z" fill="#fff" stroke="#555" stroke-width="1" stroke-linejoin="miter"/></svg>
<span class="s" style="left:788.1999999999999px;top:743.89px;font-size:15.6px;line-height:20px;color:#000;transform:scaleX(0.9359);transform-origin:0 50%;text-rendering:geometricPrecision;margin-top:1px;">Snippets</span>
<span class="s" style="left:874.4px;top:743.89px;font-size:15.6px;line-height:20px;color:#000;transform:scaleX(0.9542);transform-origin:0 50%;text-rendering:geometricPrecision;margin-top:1px;">Console</span>
<span class="s" style="left:958.3px;top:743.89px;font-size:15.6px;line-height:20px;color:#000;transform:scaleX(0.9502);transform-origin:0 50%;text-rendering:geometricPrecision;margin-top:1px;">Progress</span>
<svg style="left:1702px;top:746px;" width="14" height="14" viewBox="0 0 14 14"><rect x="0.500" y="0.500" width="10" height="9" fill="#d8e8f8" stroke="#9ab8dc"/><rect x="2.500" y="2.500" width="11" height="10" fill="#e4f0fc" stroke="#7aa0d0"/><path d="M5 7.500h6" stroke="#14307a" stroke-width="1.500"/></svg>
<svg style="left:1723px;top:745px;" width="16" height="16" viewBox="0 0 16 16"><ellipse cx="8" cy="9" rx="3.400" ry="4.600" fill="#d4d6dc" stroke="#a4a8b0"/><circle cx="8" cy="4" r="1.800" fill="#a4a8b0"/><path d="M4.500 6l-3-2.500M11.500 6l3-2.500M4.500 9h-4M11.500 9h4M5 12l-3 3M11 12l3 3" stroke="#a4a8b0" stroke-width="1.100"/></svg>
<svg style="left:1746px;top:745px;" width="15" height="15" viewBox="0 0 15 15"><circle cx="7.500" cy="7.500" r="6.800" fill="#b4b8c0" stroke="#9a9ea8"/><path d="M5.500 3.500l6 4-6 4z" fill="#fff"/></svg>
<svg style="left:1769px;top:744px;" width="17" height="16" viewBox="0 0 17 16"><circle cx="6" cy="9.500" r="4.500" fill="#e4e6ea" stroke="#a4a8b0" stroke-width="1.200"/><path d="M6 7v2.500l2 1" stroke="#a4a8b0" fill="none"/><path d="M9 3l5-2v2h3" stroke="#a4a8b0" fill="none"/><path d="M1 15l3-2" stroke="#a4a8b0" stroke-width="1.400"/></svg>
<svg style="left:1794px;top:747px;" width="12" height="12" viewBox="0 0 12 12"><rect x="0.800" y="0.800" width="10" height="10" fill="#c4a8b0" stroke="#c4c0c8" stroke-width="1.400"/></svg>
<svg style="left:1815px;top:744px;" width="17" height="17" viewBox="0 0 17 17"><rect x="0.500" y="3.500" width="7" height="9" fill="#e4e6ea" stroke="#a4a8b0"/><rect x="8.500" y="0.500" width="7" height="9" fill="#f4f5f8" stroke="#a4a8b0"/><path d="M10 3h4M10 5h4M10 7h4M2 6h4M2 8h4" stroke="#a4a8b0" stroke-width=".8"/><rect x="2" y="13" width="4" height="3" fill="#a4a8b0"/></svg>
<svg style="left:1847px;top:745px;" width="11" height="6" viewBox="0 0 11 6"><path d="M0.800 0.500h9.400l-4.700 4.700z" fill="#fff" stroke="#4d4d4d" stroke-width="1"/></svg>
<div style="left:1867px;top:747px;width:10px;height:4px;border:1px solid #555;background:#fff"></div>
<div style="left:1890px;top:747px;width:10px;height:10px;border:1px solid #555;background:#fff"></div>
<div style="left:1891px;top:749px;width:8px;height:1px;background:#666"></div>
<div style="left:499px;top:773px;width:408px;height:20px;border:1px dotted #000"></div>
<span class="s" style="left:499.4px;top:773.60px;font-size:15px;line-height:20px;color:#0a6ad4;transform:scaleX(0.9650);transform-origin:0 50%;text-decoration:underline;text-underline-offset:1px;text-decoration-thickness:1px">No servers are available. Click this link to create a new server...</span>
<div style="left:478px;top:735px;width:596px;height:83px;border:5px solid #ec1c24"></div>
<div style="left:1179px;top:1006px;width:1px;height:22px;background:#a4a4a4"></div>
<div style="left:1313px;top:1006px;width:1px;height:22px;background:#a4a4a4"></div>
<div style="left:1439px;top:1006px;width:1px;height:22px;background:#a4a4a4"></div>
<div style="left:1563.5px;top:1011.5px;width:2px;height:2px;background:#9a9a9a"></div>
<div style="left:1563.5px;top:1016.5px;width:2px;height:2px;background:#9a9a9a"></div>
<div style="left:1563.5px;top:1021.5px;width:2px;height:2px;background:#9a9a9a"></div>
<div style="left:1563.5px;top:1026.5px;width:2px;height:2px;background:#9a9a9a"></div>
</body></html>
